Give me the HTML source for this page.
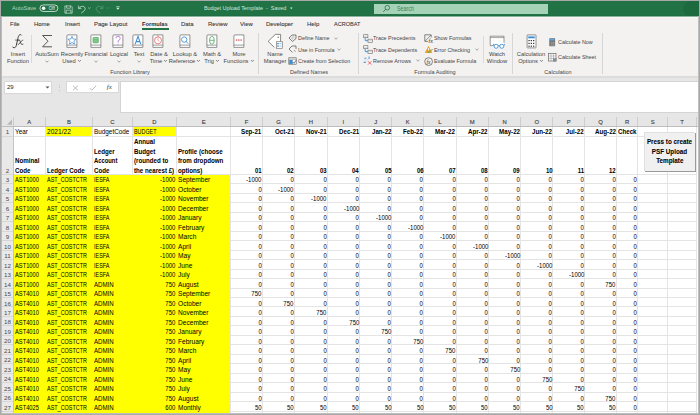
<!DOCTYPE html>
<html><head><meta charset="utf-8"><style>
html,body{margin:0;padding:0;width:700px;height:415px;overflow:hidden;background:#fff}
body{position:relative;font-family:"Liberation Sans",sans-serif}
.r{position:absolute}
.t{position:absolute;white-space:nowrap}
</style></head><body>
<div class="r" style="left:0px;top:0px;width:700px;height:415px;background:#a9a9a9;"></div>
<div class="r" style="left:1px;top:1px;width:698px;height:413px;background:#bdbdbd;"></div>
<div class="r" style="left:1px;top:1px;width:697px;height:412px;background:#c8c8c8;"></div>
<div class="r" style="left:1px;top:16px;width:1px;height:397px;background:#bcbcbc;"></div>
<div class="r" style="left:1px;top:1px;width:697px;height:15px;background:#217346;"></div>
<div class="r" style="left:1px;top:15px;width:697px;height:1px;background:#1f6d42;"></div>
<div class="r" style="left:2px;top:16px;width:696px;height:1px;background:#8ab39b;"></div>
<div class="r" style="left:2px;top:17px;width:696px;height:1px;background:#f8f7f6;"></div>
<div class="r" style="left:2px;top:18px;width:696px;height:58px;background:#f3f2f1;"></div>
<div class="r" style="left:2px;top:76px;width:696px;height:2px;background:#dcdcdc;"></div>
<div class="r" style="left:2px;top:78px;width:696px;height:40px;background:#e6e6e6;"></div>
<div class="r" style="left:2px;top:118px;width:696px;height:9px;background:#e6e6e6;"></div>
<div class="r" style="left:13px;top:127px;width:685px;height:286px;background:#ffffff;"></div>
<div class="r" style="left:46px;top:127px;width:46px;height:9px;background:#ffff00;"></div>
<div class="r" style="left:133px;top:127px;width:44px;height:9px;background:#ffff00;"></div>
<div class="r" style="left:14px;top:174px;width:217px;height:239px;background:#ffff00;"></div>
<div class="r" style="left:2px;top:127px;width:11px;height:286px;background:#e9e9e9;"></div>
<div class="r" style="left:45px;top:127px;width:1px;height:47px;background:#e4e4e4;"></div>
<div class="r" style="left:92px;top:127px;width:1px;height:47px;background:#e4e4e4;"></div>
<div class="r" style="left:132px;top:127px;width:1px;height:47px;background:#e4e4e4;"></div>
<div class="r" style="left:176px;top:127px;width:1px;height:47px;background:#e4e4e4;"></div>
<div class="r" style="left:230px;top:127px;width:1px;height:286px;background:#e4e4e4;"></div>
<div class="r" style="left:262px;top:127px;width:1px;height:286px;background:#e4e4e4;"></div>
<div class="r" style="left:294px;top:127px;width:1px;height:286px;background:#e4e4e4;"></div>
<div class="r" style="left:327px;top:127px;width:1px;height:286px;background:#e4e4e4;"></div>
<div class="r" style="left:359px;top:127px;width:1px;height:286px;background:#e4e4e4;"></div>
<div class="r" style="left:391px;top:127px;width:1px;height:286px;background:#e4e4e4;"></div>
<div class="r" style="left:423px;top:127px;width:1px;height:286px;background:#e4e4e4;"></div>
<div class="r" style="left:456px;top:127px;width:1px;height:286px;background:#e4e4e4;"></div>
<div class="r" style="left:488px;top:127px;width:1px;height:286px;background:#e4e4e4;"></div>
<div class="r" style="left:520px;top:127px;width:1px;height:286px;background:#e4e4e4;"></div>
<div class="r" style="left:552px;top:127px;width:1px;height:286px;background:#e4e4e4;"></div>
<div class="r" style="left:584px;top:127px;width:1px;height:286px;background:#e4e4e4;"></div>
<div class="r" style="left:616px;top:127px;width:1px;height:286px;background:#e4e4e4;"></div>
<div class="r" style="left:637px;top:127px;width:1px;height:286px;background:#e4e4e4;"></div>
<div class="r" style="left:667px;top:127px;width:1px;height:286px;background:#e4e4e4;"></div>
<div class="r" style="left:696px;top:127px;width:1px;height:286px;background:#e4e4e4;"></div>
<div class="r" style="left:13px;top:136px;width:684px;height:1px;background:#e4e4e4;"></div>
<div class="r" style="left:231px;top:174px;width:466px;height:1px;background:#e4e4e4;"></div>
<div class="r" style="left:13px;top:174px;width:684px;height:1px;background:#e4e4e4;"></div>
<div class="r" style="left:231px;top:183px;width:466px;height:1px;background:#e4e4e4;"></div>
<div class="r" style="left:231px;top:193px;width:466px;height:1px;background:#e4e4e4;"></div>
<div class="r" style="left:231px;top:202px;width:466px;height:1px;background:#e4e4e4;"></div>
<div class="r" style="left:231px;top:212px;width:466px;height:1px;background:#e4e4e4;"></div>
<div class="r" style="left:231px;top:221px;width:466px;height:1px;background:#e4e4e4;"></div>
<div class="r" style="left:231px;top:231px;width:466px;height:1px;background:#e4e4e4;"></div>
<div class="r" style="left:231px;top:240px;width:466px;height:1px;background:#e4e4e4;"></div>
<div class="r" style="left:231px;top:250px;width:466px;height:1px;background:#e4e4e4;"></div>
<div class="r" style="left:231px;top:259px;width:466px;height:1px;background:#e4e4e4;"></div>
<div class="r" style="left:231px;top:269px;width:466px;height:1px;background:#e4e4e4;"></div>
<div class="r" style="left:231px;top:278px;width:466px;height:1px;background:#e4e4e4;"></div>
<div class="r" style="left:231px;top:288px;width:466px;height:1px;background:#e4e4e4;"></div>
<div class="r" style="left:231px;top:297px;width:466px;height:1px;background:#e4e4e4;"></div>
<div class="r" style="left:231px;top:306px;width:466px;height:1px;background:#e4e4e4;"></div>
<div class="r" style="left:231px;top:316px;width:466px;height:1px;background:#e4e4e4;"></div>
<div class="r" style="left:231px;top:325px;width:466px;height:1px;background:#e4e4e4;"></div>
<div class="r" style="left:231px;top:335px;width:466px;height:1px;background:#e4e4e4;"></div>
<div class="r" style="left:231px;top:344px;width:466px;height:1px;background:#e4e4e4;"></div>
<div class="r" style="left:231px;top:354px;width:466px;height:1px;background:#e4e4e4;"></div>
<div class="r" style="left:231px;top:363px;width:466px;height:1px;background:#e4e4e4;"></div>
<div class="r" style="left:231px;top:373px;width:466px;height:1px;background:#e4e4e4;"></div>
<div class="r" style="left:231px;top:382px;width:466px;height:1px;background:#e4e4e4;"></div>
<div class="r" style="left:231px;top:392px;width:466px;height:1px;background:#e4e4e4;"></div>
<div class="r" style="left:231px;top:401px;width:466px;height:1px;background:#e4e4e4;"></div>
<div class="r" style="left:231px;top:411px;width:466px;height:1px;background:#e4e4e4;"></div>
<div class="r" style="left:13px;top:117px;width:1px;height:10px;background:#cdcdcd;"></div>
<div class="r" style="left:45px;top:117px;width:1px;height:10px;background:#cdcdcd;"></div>
<div class="r" style="left:92px;top:117px;width:1px;height:10px;background:#cdcdcd;"></div>
<div class="r" style="left:132px;top:117px;width:1px;height:10px;background:#cdcdcd;"></div>
<div class="r" style="left:176px;top:117px;width:1px;height:10px;background:#cdcdcd;"></div>
<div class="r" style="left:230px;top:117px;width:1px;height:10px;background:#cdcdcd;"></div>
<div class="r" style="left:262px;top:117px;width:1px;height:10px;background:#cdcdcd;"></div>
<div class="r" style="left:294px;top:117px;width:1px;height:10px;background:#cdcdcd;"></div>
<div class="r" style="left:327px;top:117px;width:1px;height:10px;background:#cdcdcd;"></div>
<div class="r" style="left:359px;top:117px;width:1px;height:10px;background:#cdcdcd;"></div>
<div class="r" style="left:391px;top:117px;width:1px;height:10px;background:#cdcdcd;"></div>
<div class="r" style="left:423px;top:117px;width:1px;height:10px;background:#cdcdcd;"></div>
<div class="r" style="left:456px;top:117px;width:1px;height:10px;background:#cdcdcd;"></div>
<div class="r" style="left:488px;top:117px;width:1px;height:10px;background:#cdcdcd;"></div>
<div class="r" style="left:520px;top:117px;width:1px;height:10px;background:#cdcdcd;"></div>
<div class="r" style="left:552px;top:117px;width:1px;height:10px;background:#cdcdcd;"></div>
<div class="r" style="left:584px;top:117px;width:1px;height:10px;background:#cdcdcd;"></div>
<div class="r" style="left:616px;top:117px;width:1px;height:10px;background:#cdcdcd;"></div>
<div class="r" style="left:637px;top:117px;width:1px;height:10px;background:#cdcdcd;"></div>
<div class="r" style="left:667px;top:117px;width:1px;height:10px;background:#cdcdcd;"></div>
<div class="r" style="left:696px;top:117px;width:1px;height:10px;background:#cdcdcd;"></div>
<div class="r" style="left:2px;top:126px;width:696px;height:1px;background:#bdbdbd;"></div>
<div class="r" style="left:2px;top:136px;width:11px;height:1px;background:#d6d6d6;"></div>
<div class="r" style="left:2px;top:174px;width:11px;height:1px;background:#d6d6d6;"></div>
<div class="r" style="left:2px;top:183px;width:11px;height:1px;background:#d6d6d6;"></div>
<div class="r" style="left:2px;top:193px;width:11px;height:1px;background:#d6d6d6;"></div>
<div class="r" style="left:2px;top:202px;width:11px;height:1px;background:#d6d6d6;"></div>
<div class="r" style="left:2px;top:212px;width:11px;height:1px;background:#d6d6d6;"></div>
<div class="r" style="left:2px;top:221px;width:11px;height:1px;background:#d6d6d6;"></div>
<div class="r" style="left:2px;top:231px;width:11px;height:1px;background:#d6d6d6;"></div>
<div class="r" style="left:2px;top:240px;width:11px;height:1px;background:#d6d6d6;"></div>
<div class="r" style="left:2px;top:250px;width:11px;height:1px;background:#d6d6d6;"></div>
<div class="r" style="left:2px;top:259px;width:11px;height:1px;background:#d6d6d6;"></div>
<div class="r" style="left:2px;top:269px;width:11px;height:1px;background:#d6d6d6;"></div>
<div class="r" style="left:2px;top:278px;width:11px;height:1px;background:#d6d6d6;"></div>
<div class="r" style="left:2px;top:288px;width:11px;height:1px;background:#d6d6d6;"></div>
<div class="r" style="left:2px;top:297px;width:11px;height:1px;background:#d6d6d6;"></div>
<div class="r" style="left:2px;top:306px;width:11px;height:1px;background:#d6d6d6;"></div>
<div class="r" style="left:2px;top:316px;width:11px;height:1px;background:#d6d6d6;"></div>
<div class="r" style="left:2px;top:325px;width:11px;height:1px;background:#d6d6d6;"></div>
<div class="r" style="left:2px;top:335px;width:11px;height:1px;background:#d6d6d6;"></div>
<div class="r" style="left:2px;top:344px;width:11px;height:1px;background:#d6d6d6;"></div>
<div class="r" style="left:2px;top:354px;width:11px;height:1px;background:#d6d6d6;"></div>
<div class="r" style="left:2px;top:363px;width:11px;height:1px;background:#d6d6d6;"></div>
<div class="r" style="left:2px;top:373px;width:11px;height:1px;background:#d6d6d6;"></div>
<div class="r" style="left:2px;top:382px;width:11px;height:1px;background:#d6d6d6;"></div>
<div class="r" style="left:2px;top:392px;width:11px;height:1px;background:#d6d6d6;"></div>
<div class="r" style="left:2px;top:401px;width:11px;height:1px;background:#d6d6d6;"></div>
<div class="r" style="left:2px;top:411px;width:11px;height:1px;background:#d6d6d6;"></div>
<div class="r" style="left:13px;top:127px;width:1px;height:286px;background:#c4c4c4;"></div>
<div class="t" style="left:-70.75px;width:200px;text-align:center;top:118.76px;font-size:5.9px;line-height:6.79px;font-weight:normal;color:#3c3c3c;-webkit-text-stroke:0.12px #3c3c3c;">A</div>
<div class="t" style="left:-31.05px;width:200px;text-align:center;top:118.76px;font-size:5.9px;line-height:6.79px;font-weight:normal;color:#3c3c3c;-webkit-text-stroke:0.12px #3c3c3c;">B</div>
<div class="t" style="left:12.40px;width:200px;text-align:center;top:118.76px;font-size:5.9px;line-height:6.79px;font-weight:normal;color:#3c3c3c;-webkit-text-stroke:0.12px #3c3c3c;">C</div>
<div class="t" style="left:54.50px;width:200px;text-align:center;top:118.76px;font-size:5.9px;line-height:6.79px;font-weight:normal;color:#3c3c3c;-webkit-text-stroke:0.12px #3c3c3c;">D</div>
<div class="t" style="left:103.60px;width:200px;text-align:center;top:118.76px;font-size:5.9px;line-height:6.79px;font-weight:normal;color:#3c3c3c;-webkit-text-stroke:0.12px #3c3c3c;">E</div>
<div class="t" style="left:146.50px;width:200px;text-align:center;top:118.76px;font-size:5.9px;line-height:6.79px;font-weight:normal;color:#3c3c3c;-webkit-text-stroke:0.12px #3c3c3c;">F</div>
<div class="t" style="left:178.45px;width:200px;text-align:center;top:118.76px;font-size:5.9px;line-height:6.79px;font-weight:normal;color:#3c3c3c;-webkit-text-stroke:0.12px #3c3c3c;">G</div>
<div class="t" style="left:210.80px;width:200px;text-align:center;top:118.76px;font-size:5.9px;line-height:6.79px;font-weight:normal;color:#3c3c3c;-webkit-text-stroke:0.12px #3c3c3c;">H</div>
<div class="t" style="left:243.40px;width:200px;text-align:center;top:118.76px;font-size:5.9px;line-height:6.79px;font-weight:normal;color:#3c3c3c;-webkit-text-stroke:0.12px #3c3c3c;">I</div>
<div class="t" style="left:275.75px;width:200px;text-align:center;top:118.76px;font-size:5.9px;line-height:6.79px;font-weight:normal;color:#3c3c3c;-webkit-text-stroke:0.12px #3c3c3c;">J</div>
<div class="t" style="left:307.80px;width:200px;text-align:center;top:118.76px;font-size:5.9px;line-height:6.79px;font-weight:normal;color:#3c3c3c;-webkit-text-stroke:0.12px #3c3c3c;">K</div>
<div class="t" style="left:339.90px;width:200px;text-align:center;top:118.76px;font-size:5.9px;line-height:6.79px;font-weight:normal;color:#3c3c3c;-webkit-text-stroke:0.12px #3c3c3c;">L</div>
<div class="t" style="left:372.30px;width:200px;text-align:center;top:118.76px;font-size:5.9px;line-height:6.79px;font-weight:normal;color:#3c3c3c;-webkit-text-stroke:0.12px #3c3c3c;">M</div>
<div class="t" style="left:404.60px;width:200px;text-align:center;top:118.76px;font-size:5.9px;line-height:6.79px;font-weight:normal;color:#3c3c3c;-webkit-text-stroke:0.12px #3c3c3c;">N</div>
<div class="t" style="left:436.75px;width:200px;text-align:center;top:118.76px;font-size:5.9px;line-height:6.79px;font-weight:normal;color:#3c3c3c;-webkit-text-stroke:0.12px #3c3c3c;">O</div>
<div class="t" style="left:468.75px;width:200px;text-align:center;top:118.76px;font-size:5.9px;line-height:6.79px;font-weight:normal;color:#3c3c3c;-webkit-text-stroke:0.12px #3c3c3c;">P</div>
<div class="t" style="left:500.55px;width:200px;text-align:center;top:118.76px;font-size:5.9px;line-height:6.79px;font-weight:normal;color:#3c3c3c;-webkit-text-stroke:0.12px #3c3c3c;">Q</div>
<div class="t" style="left:527.20px;width:200px;text-align:center;top:118.76px;font-size:5.9px;line-height:6.79px;font-weight:normal;color:#3c3c3c;-webkit-text-stroke:0.12px #3c3c3c;">R</div>
<div class="t" style="left:552.65px;width:200px;text-align:center;top:118.76px;font-size:5.9px;line-height:6.79px;font-weight:normal;color:#3c3c3c;-webkit-text-stroke:0.12px #3c3c3c;">S</div>
<div class="t" style="left:581.95px;width:200px;text-align:center;top:118.76px;font-size:5.9px;line-height:6.79px;font-weight:normal;color:#3c3c3c;-webkit-text-stroke:0.12px #3c3c3c;">T</div>
<div class="t" style="left:-92.50px;width:200px;text-align:center;top:128.49px;font-size:6.2px;line-height:7.13px;font-weight:normal;color:#4a4a4a;">1</div>
<div class="t" style="left:-92.50px;width:200px;text-align:center;top:166.99px;font-size:6.2px;line-height:7.13px;font-weight:normal;color:#4a4a4a;">2</div>
<div class="t" style="left:-92.50px;width:200px;text-align:center;top:176.49px;font-size:6.2px;line-height:7.13px;font-weight:normal;color:#4a4a4a;">3</div>
<div class="t" style="left:-92.50px;width:200px;text-align:center;top:185.95px;font-size:6.2px;line-height:7.13px;font-weight:normal;color:#4a4a4a;">4</div>
<div class="t" style="left:-92.50px;width:200px;text-align:center;top:195.41px;font-size:6.2px;line-height:7.13px;font-weight:normal;color:#4a4a4a;">5</div>
<div class="t" style="left:-92.50px;width:200px;text-align:center;top:204.88px;font-size:6.2px;line-height:7.13px;font-weight:normal;color:#4a4a4a;">6</div>
<div class="t" style="left:-92.50px;width:200px;text-align:center;top:214.34px;font-size:6.2px;line-height:7.13px;font-weight:normal;color:#4a4a4a;">7</div>
<div class="t" style="left:-92.50px;width:200px;text-align:center;top:223.81px;font-size:6.2px;line-height:7.13px;font-weight:normal;color:#4a4a4a;">8</div>
<div class="t" style="left:-92.50px;width:200px;text-align:center;top:233.27px;font-size:6.2px;line-height:7.13px;font-weight:normal;color:#4a4a4a;">9</div>
<div class="t" style="left:-92.50px;width:200px;text-align:center;top:242.73px;font-size:6.2px;line-height:7.13px;font-weight:normal;color:#4a4a4a;">10</div>
<div class="t" style="left:-92.50px;width:200px;text-align:center;top:252.20px;font-size:6.2px;line-height:7.13px;font-weight:normal;color:#4a4a4a;">11</div>
<div class="t" style="left:-92.50px;width:200px;text-align:center;top:261.66px;font-size:6.2px;line-height:7.13px;font-weight:normal;color:#4a4a4a;">12</div>
<div class="t" style="left:-92.50px;width:200px;text-align:center;top:271.13px;font-size:6.2px;line-height:7.13px;font-weight:normal;color:#4a4a4a;">13</div>
<div class="t" style="left:-92.50px;width:200px;text-align:center;top:280.59px;font-size:6.2px;line-height:7.13px;font-weight:normal;color:#4a4a4a;">14</div>
<div class="t" style="left:-92.50px;width:200px;text-align:center;top:290.05px;font-size:6.2px;line-height:7.13px;font-weight:normal;color:#4a4a4a;">15</div>
<div class="t" style="left:-92.50px;width:200px;text-align:center;top:299.52px;font-size:6.2px;line-height:7.13px;font-weight:normal;color:#4a4a4a;">16</div>
<div class="t" style="left:-92.50px;width:200px;text-align:center;top:308.98px;font-size:6.2px;line-height:7.13px;font-weight:normal;color:#4a4a4a;">17</div>
<div class="t" style="left:-92.50px;width:200px;text-align:center;top:318.45px;font-size:6.2px;line-height:7.13px;font-weight:normal;color:#4a4a4a;">18</div>
<div class="t" style="left:-92.50px;width:200px;text-align:center;top:327.91px;font-size:6.2px;line-height:7.13px;font-weight:normal;color:#4a4a4a;">19</div>
<div class="t" style="left:-92.50px;width:200px;text-align:center;top:337.37px;font-size:6.2px;line-height:7.13px;font-weight:normal;color:#4a4a4a;">20</div>
<div class="t" style="left:-92.50px;width:200px;text-align:center;top:346.84px;font-size:6.2px;line-height:7.13px;font-weight:normal;color:#4a4a4a;">21</div>
<div class="t" style="left:-92.50px;width:200px;text-align:center;top:356.30px;font-size:6.2px;line-height:7.13px;font-weight:normal;color:#4a4a4a;">22</div>
<div class="t" style="left:-92.50px;width:200px;text-align:center;top:365.77px;font-size:6.2px;line-height:7.13px;font-weight:normal;color:#4a4a4a;">23</div>
<div class="t" style="left:-92.50px;width:200px;text-align:center;top:375.23px;font-size:6.2px;line-height:7.13px;font-weight:normal;color:#4a4a4a;">24</div>
<div class="t" style="left:-92.50px;width:200px;text-align:center;top:384.69px;font-size:6.2px;line-height:7.13px;font-weight:normal;color:#4a4a4a;">25</div>
<div class="t" style="left:-92.50px;width:200px;text-align:center;top:394.16px;font-size:6.2px;line-height:7.13px;font-weight:normal;color:#4a4a4a;">26</div>
<div class="t" style="left:-92.50px;width:200px;text-align:center;top:403.62px;font-size:6.2px;line-height:7.13px;font-weight:normal;color:#4a4a4a;">27</div>
<svg class="r" style="left:3px;top:119px" width="10" height="8"><path d="M9 0.6 L9 5.7 L3.9 5.7 Z" fill="#b8b8b8"/></svg>
<div class="t" style="left:14.50px;top:128.13px;font-size:6.8px;line-height:7.82px;font-weight:normal;color:#000;transform:scaleX(0.9353);transform-origin:left;">Year</div>
<div class="t" style="left:47.00px;top:128.13px;font-size:6.8px;line-height:7.82px;font-weight:normal;color:#000;transform:scaleX(0.9706);transform-origin:left;">2021/22</div>
<div class="t" style="left:93.90px;top:128.13px;font-size:6.8px;line-height:7.82px;font-weight:normal;color:#000;transform:scaleX(0.9353);transform-origin:left;">BudgetCode</div>
<div class="t" style="left:133.90px;top:128.13px;font-size:6.8px;line-height:7.82px;font-weight:normal;color:#000;transform:scaleX(0.7941);transform-origin:left;">BUDGET</div>
<div class="t" style="right:438.30px;top:128.13px;font-size:6.8px;line-height:7.82px;font-weight:bold;color:#000;transform:scaleX(0.9088);transform-origin:right;-webkit-text-stroke:0.02px #000;">Sep-21</div>
<div class="t" style="right:406.20px;top:128.13px;font-size:6.8px;line-height:7.82px;font-weight:bold;color:#000;transform:scaleX(0.9088);transform-origin:right;-webkit-text-stroke:0.02px #000;">Oct-21</div>
<div class="t" style="right:373.60px;top:128.13px;font-size:6.8px;line-height:7.82px;font-weight:bold;color:#000;transform:scaleX(0.9088);transform-origin:right;-webkit-text-stroke:0.02px #000;">Nov-21</div>
<div class="t" style="right:341.00px;top:128.13px;font-size:6.8px;line-height:7.82px;font-weight:bold;color:#000;transform:scaleX(0.9088);transform-origin:right;-webkit-text-stroke:0.02px #000;">Dec-21</div>
<div class="t" style="right:308.90px;top:128.13px;font-size:6.8px;line-height:7.82px;font-weight:bold;color:#000;transform:scaleX(0.9088);transform-origin:right;-webkit-text-stroke:0.02px #000;">Jan-22</div>
<div class="t" style="right:276.90px;top:128.13px;font-size:6.8px;line-height:7.82px;font-weight:bold;color:#000;transform:scaleX(0.9088);transform-origin:right;-webkit-text-stroke:0.02px #000;">Feb-22</div>
<div class="t" style="right:244.70px;top:128.13px;font-size:6.8px;line-height:7.82px;font-weight:bold;color:#000;transform:scaleX(0.9088);transform-origin:right;-webkit-text-stroke:0.02px #000;">Mar-22</div>
<div class="t" style="right:212.10px;top:128.13px;font-size:6.8px;line-height:7.82px;font-weight:bold;color:#000;transform:scaleX(0.9088);transform-origin:right;-webkit-text-stroke:0.02px #000;">Apr-22</div>
<div class="t" style="right:180.10px;top:128.13px;font-size:6.8px;line-height:7.82px;font-weight:bold;color:#000;transform:scaleX(0.9088);transform-origin:right;-webkit-text-stroke:0.02px #000;">May-22</div>
<div class="t" style="right:147.80px;top:128.13px;font-size:6.8px;line-height:7.82px;font-weight:bold;color:#000;transform:scaleX(0.9088);transform-origin:right;-webkit-text-stroke:0.02px #000;">Jun-22</div>
<div class="t" style="right:116.10px;top:128.13px;font-size:6.8px;line-height:7.82px;font-weight:bold;color:#000;transform:scaleX(0.9088);transform-origin:right;-webkit-text-stroke:0.02px #000;">Jul-22</div>
<div class="t" style="right:84.20px;top:128.13px;font-size:6.8px;line-height:7.82px;font-weight:bold;color:#000;transform:scaleX(0.9088);transform-origin:right;-webkit-text-stroke:0.02px #000;">Aug-22</div>
<div class="t" style="left:618.00px;top:128.13px;font-size:6.8px;line-height:7.82px;font-weight:bold;color:#000;transform:scaleX(0.9088);transform-origin:left;-webkit-text-stroke:0.02px #000;">Check</div>
<div class="t" style="left:14.50px;top:166.73px;font-size:6.8px;line-height:7.82px;font-weight:bold;color:#000;transform:scaleX(0.9088);transform-origin:left;-webkit-text-stroke:0.02px #000;">Code</div>
<div class="t" style="left:14.50px;top:157.28px;font-size:6.8px;line-height:7.82px;font-weight:bold;color:#000;transform:scaleX(0.9088);transform-origin:left;-webkit-text-stroke:0.02px #000;">Nominal</div>
<div class="t" style="left:47.00px;top:166.73px;font-size:6.8px;line-height:7.82px;font-weight:bold;color:#000;transform:scaleX(0.9088);transform-origin:left;-webkit-text-stroke:0.02px #000;">Ledger Code</div>
<div class="t" style="left:93.90px;top:166.73px;font-size:6.8px;line-height:7.82px;font-weight:bold;color:#000;transform:scaleX(0.9088);transform-origin:left;-webkit-text-stroke:0.02px #000;">Code</div>
<div class="t" style="left:93.90px;top:157.28px;font-size:6.8px;line-height:7.82px;font-weight:bold;color:#000;transform:scaleX(0.8603);transform-origin:left;-webkit-text-stroke:0.02px #000;">Account</div>
<div class="t" style="left:93.90px;top:147.83px;font-size:6.8px;line-height:7.82px;font-weight:bold;color:#000;transform:scaleX(0.9088);transform-origin:left;-webkit-text-stroke:0.02px #000;">Ledger</div>
<div class="t" style="left:133.90px;top:166.73px;font-size:6.8px;line-height:7.82px;font-weight:bold;color:#000;transform:scaleX(0.9088);transform-origin:left;-webkit-text-stroke:0.02px #000;">the nearest £)</div>
<div class="t" style="left:133.90px;top:157.28px;font-size:6.8px;line-height:7.82px;font-weight:bold;color:#000;transform:scaleX(0.9088);transform-origin:left;-webkit-text-stroke:0.02px #000;">(rounded to</div>
<div class="t" style="left:133.90px;top:147.83px;font-size:6.8px;line-height:7.82px;font-weight:bold;color:#000;transform:scaleX(0.9088);transform-origin:left;-webkit-text-stroke:0.02px #000;">Budget</div>
<div class="t" style="left:133.90px;top:138.38px;font-size:6.8px;line-height:7.82px;font-weight:bold;color:#000;transform:scaleX(0.9088);transform-origin:left;-webkit-text-stroke:0.02px #000;">Annual</div>
<div class="t" style="left:178.10px;top:166.73px;font-size:6.8px;line-height:7.82px;font-weight:bold;color:#000;transform:scaleX(0.9088);transform-origin:left;-webkit-text-stroke:0.02px #000;">options)</div>
<div class="t" style="left:178.10px;top:157.28px;font-size:6.8px;line-height:7.82px;font-weight:bold;color:#000;transform:scaleX(0.9088);transform-origin:left;-webkit-text-stroke:0.02px #000;">from dropdown</div>
<div class="t" style="left:178.10px;top:147.83px;font-size:6.8px;line-height:7.82px;font-weight:bold;color:#000;transform:scaleX(0.9088);transform-origin:left;-webkit-text-stroke:0.02px #000;">Profile (choose</div>
<div class="t" style="right:438.30px;top:166.73px;font-size:6.8px;line-height:7.82px;font-weight:bold;color:#000;transform:scaleX(0.8824);transform-origin:right;-webkit-text-stroke:0.02px #000;">01</div>
<div class="t" style="right:406.20px;top:166.73px;font-size:6.8px;line-height:7.82px;font-weight:bold;color:#000;transform:scaleX(0.8824);transform-origin:right;-webkit-text-stroke:0.02px #000;">02</div>
<div class="t" style="right:373.60px;top:166.73px;font-size:6.8px;line-height:7.82px;font-weight:bold;color:#000;transform:scaleX(0.8824);transform-origin:right;-webkit-text-stroke:0.02px #000;">03</div>
<div class="t" style="right:341.00px;top:166.73px;font-size:6.8px;line-height:7.82px;font-weight:bold;color:#000;transform:scaleX(0.8824);transform-origin:right;-webkit-text-stroke:0.02px #000;">04</div>
<div class="t" style="right:308.90px;top:166.73px;font-size:6.8px;line-height:7.82px;font-weight:bold;color:#000;transform:scaleX(0.8824);transform-origin:right;-webkit-text-stroke:0.02px #000;">05</div>
<div class="t" style="right:276.90px;top:166.73px;font-size:6.8px;line-height:7.82px;font-weight:bold;color:#000;transform:scaleX(0.8824);transform-origin:right;-webkit-text-stroke:0.02px #000;">06</div>
<div class="t" style="right:244.70px;top:166.73px;font-size:6.8px;line-height:7.82px;font-weight:bold;color:#000;transform:scaleX(0.8824);transform-origin:right;-webkit-text-stroke:0.02px #000;">07</div>
<div class="t" style="right:212.10px;top:166.73px;font-size:6.8px;line-height:7.82px;font-weight:bold;color:#000;transform:scaleX(0.8824);transform-origin:right;-webkit-text-stroke:0.02px #000;">08</div>
<div class="t" style="right:180.10px;top:166.73px;font-size:6.8px;line-height:7.82px;font-weight:bold;color:#000;transform:scaleX(0.8824);transform-origin:right;-webkit-text-stroke:0.02px #000;">09</div>
<div class="t" style="right:147.80px;top:166.73px;font-size:6.8px;line-height:7.82px;font-weight:bold;color:#000;transform:scaleX(0.8824);transform-origin:right;-webkit-text-stroke:0.02px #000;">10</div>
<div class="t" style="right:116.10px;top:166.73px;font-size:6.8px;line-height:7.82px;font-weight:bold;color:#000;transform:scaleX(0.8824);transform-origin:right;-webkit-text-stroke:0.02px #000;">11</div>
<div class="t" style="right:84.20px;top:166.73px;font-size:6.8px;line-height:7.82px;font-weight:bold;color:#000;transform:scaleX(0.8824);transform-origin:right;-webkit-text-stroke:0.02px #000;">12</div>
<div class="t" style="left:14.50px;top:176.13px;font-size:6.8px;line-height:7.82px;font-weight:normal;color:#000;transform:scaleX(0.8426);transform-origin:left;">AST1000</div>
<div class="t" style="left:47.00px;top:176.13px;font-size:6.8px;line-height:7.82px;font-weight:normal;color:#000;transform:scaleX(0.8029);transform-origin:left;">AST_COSTCTR</div>
<div class="t" style="left:93.90px;top:176.13px;font-size:6.8px;line-height:7.82px;font-weight:normal;color:#000;transform:scaleX(0.7985);transform-origin:left;">IESFA</div>
<div class="t" style="right:524.70px;top:176.13px;font-size:6.8px;line-height:7.82px;font-weight:normal;color:#000;transform:scaleX(0.8824);transform-origin:right;">-1000</div>
<div class="t" style="left:178.10px;top:176.13px;font-size:6.8px;line-height:7.82px;font-weight:normal;color:#000;transform:scaleX(0.9706);transform-origin:left;">September</div>
<div class="t" style="right:438.30px;top:176.13px;font-size:6.8px;line-height:7.82px;font-weight:normal;color:#000;transform:scaleX(0.8824);transform-origin:right;">-1000</div>
<div class="t" style="right:406.20px;top:176.13px;font-size:6.8px;line-height:7.82px;font-weight:normal;color:#000;transform:scaleX(0.8824);transform-origin:right;">0</div>
<div class="t" style="right:373.60px;top:176.13px;font-size:6.8px;line-height:7.82px;font-weight:normal;color:#000;transform:scaleX(0.8824);transform-origin:right;">0</div>
<div class="t" style="right:341.00px;top:176.13px;font-size:6.8px;line-height:7.82px;font-weight:normal;color:#000;transform:scaleX(0.8824);transform-origin:right;">0</div>
<div class="t" style="right:308.90px;top:176.13px;font-size:6.8px;line-height:7.82px;font-weight:normal;color:#000;transform:scaleX(0.8824);transform-origin:right;">0</div>
<div class="t" style="right:276.90px;top:176.13px;font-size:6.8px;line-height:7.82px;font-weight:normal;color:#000;transform:scaleX(0.8824);transform-origin:right;">0</div>
<div class="t" style="right:244.70px;top:176.13px;font-size:6.8px;line-height:7.82px;font-weight:normal;color:#000;transform:scaleX(0.8824);transform-origin:right;">0</div>
<div class="t" style="right:212.10px;top:176.13px;font-size:6.8px;line-height:7.82px;font-weight:normal;color:#000;transform:scaleX(0.8824);transform-origin:right;">0</div>
<div class="t" style="right:180.10px;top:176.13px;font-size:6.8px;line-height:7.82px;font-weight:normal;color:#000;transform:scaleX(0.8824);transform-origin:right;">0</div>
<div class="t" style="right:147.80px;top:176.13px;font-size:6.8px;line-height:7.82px;font-weight:normal;color:#000;transform:scaleX(0.8824);transform-origin:right;">0</div>
<div class="t" style="right:116.10px;top:176.13px;font-size:6.8px;line-height:7.82px;font-weight:normal;color:#000;transform:scaleX(0.8824);transform-origin:right;">0</div>
<div class="t" style="right:84.20px;top:176.13px;font-size:6.8px;line-height:7.82px;font-weight:normal;color:#000;transform:scaleX(0.8824);transform-origin:right;">0</div>
<div class="t" style="right:62.80px;top:176.13px;font-size:6.8px;line-height:7.82px;font-weight:normal;color:#000;transform:scaleX(0.8824);transform-origin:right;">0</div>
<div class="t" style="left:14.50px;top:185.63px;font-size:6.8px;line-height:7.82px;font-weight:normal;color:#000;transform:scaleX(0.8426);transform-origin:left;">AST1000</div>
<div class="t" style="left:47.00px;top:185.63px;font-size:6.8px;line-height:7.82px;font-weight:normal;color:#000;transform:scaleX(0.8029);transform-origin:left;">AST_COSTCTR</div>
<div class="t" style="left:93.90px;top:185.63px;font-size:6.8px;line-height:7.82px;font-weight:normal;color:#000;transform:scaleX(0.7985);transform-origin:left;">IESFA</div>
<div class="t" style="right:524.70px;top:185.63px;font-size:6.8px;line-height:7.82px;font-weight:normal;color:#000;transform:scaleX(0.8824);transform-origin:right;">-1000</div>
<div class="t" style="left:178.10px;top:185.63px;font-size:6.8px;line-height:7.82px;font-weight:normal;color:#000;transform:scaleX(0.9706);transform-origin:left;">October</div>
<div class="t" style="right:438.30px;top:185.63px;font-size:6.8px;line-height:7.82px;font-weight:normal;color:#000;transform:scaleX(0.8824);transform-origin:right;">0</div>
<div class="t" style="right:406.20px;top:185.63px;font-size:6.8px;line-height:7.82px;font-weight:normal;color:#000;transform:scaleX(0.8824);transform-origin:right;">-1000</div>
<div class="t" style="right:373.60px;top:185.63px;font-size:6.8px;line-height:7.82px;font-weight:normal;color:#000;transform:scaleX(0.8824);transform-origin:right;">0</div>
<div class="t" style="right:341.00px;top:185.63px;font-size:6.8px;line-height:7.82px;font-weight:normal;color:#000;transform:scaleX(0.8824);transform-origin:right;">0</div>
<div class="t" style="right:308.90px;top:185.63px;font-size:6.8px;line-height:7.82px;font-weight:normal;color:#000;transform:scaleX(0.8824);transform-origin:right;">0</div>
<div class="t" style="right:276.90px;top:185.63px;font-size:6.8px;line-height:7.82px;font-weight:normal;color:#000;transform:scaleX(0.8824);transform-origin:right;">0</div>
<div class="t" style="right:244.70px;top:185.63px;font-size:6.8px;line-height:7.82px;font-weight:normal;color:#000;transform:scaleX(0.8824);transform-origin:right;">0</div>
<div class="t" style="right:212.10px;top:185.63px;font-size:6.8px;line-height:7.82px;font-weight:normal;color:#000;transform:scaleX(0.8824);transform-origin:right;">0</div>
<div class="t" style="right:180.10px;top:185.63px;font-size:6.8px;line-height:7.82px;font-weight:normal;color:#000;transform:scaleX(0.8824);transform-origin:right;">0</div>
<div class="t" style="right:147.80px;top:185.63px;font-size:6.8px;line-height:7.82px;font-weight:normal;color:#000;transform:scaleX(0.8824);transform-origin:right;">0</div>
<div class="t" style="right:116.10px;top:185.63px;font-size:6.8px;line-height:7.82px;font-weight:normal;color:#000;transform:scaleX(0.8824);transform-origin:right;">0</div>
<div class="t" style="right:84.20px;top:185.63px;font-size:6.8px;line-height:7.82px;font-weight:normal;color:#000;transform:scaleX(0.8824);transform-origin:right;">0</div>
<div class="t" style="right:62.80px;top:185.63px;font-size:6.8px;line-height:7.82px;font-weight:normal;color:#000;transform:scaleX(0.8824);transform-origin:right;">0</div>
<div class="t" style="left:14.50px;top:195.13px;font-size:6.8px;line-height:7.82px;font-weight:normal;color:#000;transform:scaleX(0.8426);transform-origin:left;">AST1000</div>
<div class="t" style="left:47.00px;top:195.13px;font-size:6.8px;line-height:7.82px;font-weight:normal;color:#000;transform:scaleX(0.8029);transform-origin:left;">AST_COSTCTR</div>
<div class="t" style="left:93.90px;top:195.13px;font-size:6.8px;line-height:7.82px;font-weight:normal;color:#000;transform:scaleX(0.7985);transform-origin:left;">IESFA</div>
<div class="t" style="right:524.70px;top:195.13px;font-size:6.8px;line-height:7.82px;font-weight:normal;color:#000;transform:scaleX(0.8824);transform-origin:right;">-1000</div>
<div class="t" style="left:178.10px;top:195.13px;font-size:6.8px;line-height:7.82px;font-weight:normal;color:#000;transform:scaleX(0.9706);transform-origin:left;">November</div>
<div class="t" style="right:438.30px;top:195.13px;font-size:6.8px;line-height:7.82px;font-weight:normal;color:#000;transform:scaleX(0.8824);transform-origin:right;">0</div>
<div class="t" style="right:406.20px;top:195.13px;font-size:6.8px;line-height:7.82px;font-weight:normal;color:#000;transform:scaleX(0.8824);transform-origin:right;">0</div>
<div class="t" style="right:373.60px;top:195.13px;font-size:6.8px;line-height:7.82px;font-weight:normal;color:#000;transform:scaleX(0.8824);transform-origin:right;">-1000</div>
<div class="t" style="right:341.00px;top:195.13px;font-size:6.8px;line-height:7.82px;font-weight:normal;color:#000;transform:scaleX(0.8824);transform-origin:right;">0</div>
<div class="t" style="right:308.90px;top:195.13px;font-size:6.8px;line-height:7.82px;font-weight:normal;color:#000;transform:scaleX(0.8824);transform-origin:right;">0</div>
<div class="t" style="right:276.90px;top:195.13px;font-size:6.8px;line-height:7.82px;font-weight:normal;color:#000;transform:scaleX(0.8824);transform-origin:right;">0</div>
<div class="t" style="right:244.70px;top:195.13px;font-size:6.8px;line-height:7.82px;font-weight:normal;color:#000;transform:scaleX(0.8824);transform-origin:right;">0</div>
<div class="t" style="right:212.10px;top:195.13px;font-size:6.8px;line-height:7.82px;font-weight:normal;color:#000;transform:scaleX(0.8824);transform-origin:right;">0</div>
<div class="t" style="right:180.10px;top:195.13px;font-size:6.8px;line-height:7.82px;font-weight:normal;color:#000;transform:scaleX(0.8824);transform-origin:right;">0</div>
<div class="t" style="right:147.80px;top:195.13px;font-size:6.8px;line-height:7.82px;font-weight:normal;color:#000;transform:scaleX(0.8824);transform-origin:right;">0</div>
<div class="t" style="right:116.10px;top:195.13px;font-size:6.8px;line-height:7.82px;font-weight:normal;color:#000;transform:scaleX(0.8824);transform-origin:right;">0</div>
<div class="t" style="right:84.20px;top:195.13px;font-size:6.8px;line-height:7.82px;font-weight:normal;color:#000;transform:scaleX(0.8824);transform-origin:right;">0</div>
<div class="t" style="right:62.80px;top:195.13px;font-size:6.8px;line-height:7.82px;font-weight:normal;color:#000;transform:scaleX(0.8824);transform-origin:right;">0</div>
<div class="t" style="left:14.50px;top:204.63px;font-size:6.8px;line-height:7.82px;font-weight:normal;color:#000;transform:scaleX(0.8426);transform-origin:left;">AST1000</div>
<div class="t" style="left:47.00px;top:204.63px;font-size:6.8px;line-height:7.82px;font-weight:normal;color:#000;transform:scaleX(0.8029);transform-origin:left;">AST_COSTCTR</div>
<div class="t" style="left:93.90px;top:204.63px;font-size:6.8px;line-height:7.82px;font-weight:normal;color:#000;transform:scaleX(0.7985);transform-origin:left;">IESFA</div>
<div class="t" style="right:524.70px;top:204.63px;font-size:6.8px;line-height:7.82px;font-weight:normal;color:#000;transform:scaleX(0.8824);transform-origin:right;">-1000</div>
<div class="t" style="left:178.10px;top:204.63px;font-size:6.8px;line-height:7.82px;font-weight:normal;color:#000;transform:scaleX(0.9706);transform-origin:left;">December</div>
<div class="t" style="right:438.30px;top:204.63px;font-size:6.8px;line-height:7.82px;font-weight:normal;color:#000;transform:scaleX(0.8824);transform-origin:right;">0</div>
<div class="t" style="right:406.20px;top:204.63px;font-size:6.8px;line-height:7.82px;font-weight:normal;color:#000;transform:scaleX(0.8824);transform-origin:right;">0</div>
<div class="t" style="right:373.60px;top:204.63px;font-size:6.8px;line-height:7.82px;font-weight:normal;color:#000;transform:scaleX(0.8824);transform-origin:right;">0</div>
<div class="t" style="right:341.00px;top:204.63px;font-size:6.8px;line-height:7.82px;font-weight:normal;color:#000;transform:scaleX(0.8824);transform-origin:right;">-1000</div>
<div class="t" style="right:308.90px;top:204.63px;font-size:6.8px;line-height:7.82px;font-weight:normal;color:#000;transform:scaleX(0.8824);transform-origin:right;">0</div>
<div class="t" style="right:276.90px;top:204.63px;font-size:6.8px;line-height:7.82px;font-weight:normal;color:#000;transform:scaleX(0.8824);transform-origin:right;">0</div>
<div class="t" style="right:244.70px;top:204.63px;font-size:6.8px;line-height:7.82px;font-weight:normal;color:#000;transform:scaleX(0.8824);transform-origin:right;">0</div>
<div class="t" style="right:212.10px;top:204.63px;font-size:6.8px;line-height:7.82px;font-weight:normal;color:#000;transform:scaleX(0.8824);transform-origin:right;">0</div>
<div class="t" style="right:180.10px;top:204.63px;font-size:6.8px;line-height:7.82px;font-weight:normal;color:#000;transform:scaleX(0.8824);transform-origin:right;">0</div>
<div class="t" style="right:147.80px;top:204.63px;font-size:6.8px;line-height:7.82px;font-weight:normal;color:#000;transform:scaleX(0.8824);transform-origin:right;">0</div>
<div class="t" style="right:116.10px;top:204.63px;font-size:6.8px;line-height:7.82px;font-weight:normal;color:#000;transform:scaleX(0.8824);transform-origin:right;">0</div>
<div class="t" style="right:84.20px;top:204.63px;font-size:6.8px;line-height:7.82px;font-weight:normal;color:#000;transform:scaleX(0.8824);transform-origin:right;">0</div>
<div class="t" style="right:62.80px;top:204.63px;font-size:6.8px;line-height:7.82px;font-weight:normal;color:#000;transform:scaleX(0.8824);transform-origin:right;">0</div>
<div class="t" style="left:14.50px;top:214.13px;font-size:6.8px;line-height:7.82px;font-weight:normal;color:#000;transform:scaleX(0.8426);transform-origin:left;">AST1000</div>
<div class="t" style="left:47.00px;top:214.13px;font-size:6.8px;line-height:7.82px;font-weight:normal;color:#000;transform:scaleX(0.8029);transform-origin:left;">AST_COSTCTR</div>
<div class="t" style="left:93.90px;top:214.13px;font-size:6.8px;line-height:7.82px;font-weight:normal;color:#000;transform:scaleX(0.7985);transform-origin:left;">IESFA</div>
<div class="t" style="right:524.70px;top:214.13px;font-size:6.8px;line-height:7.82px;font-weight:normal;color:#000;transform:scaleX(0.8824);transform-origin:right;">-1000</div>
<div class="t" style="left:178.10px;top:214.13px;font-size:6.8px;line-height:7.82px;font-weight:normal;color:#000;transform:scaleX(0.9706);transform-origin:left;">January</div>
<div class="t" style="right:438.30px;top:214.13px;font-size:6.8px;line-height:7.82px;font-weight:normal;color:#000;transform:scaleX(0.8824);transform-origin:right;">0</div>
<div class="t" style="right:406.20px;top:214.13px;font-size:6.8px;line-height:7.82px;font-weight:normal;color:#000;transform:scaleX(0.8824);transform-origin:right;">0</div>
<div class="t" style="right:373.60px;top:214.13px;font-size:6.8px;line-height:7.82px;font-weight:normal;color:#000;transform:scaleX(0.8824);transform-origin:right;">0</div>
<div class="t" style="right:341.00px;top:214.13px;font-size:6.8px;line-height:7.82px;font-weight:normal;color:#000;transform:scaleX(0.8824);transform-origin:right;">0</div>
<div class="t" style="right:308.90px;top:214.13px;font-size:6.8px;line-height:7.82px;font-weight:normal;color:#000;transform:scaleX(0.8824);transform-origin:right;">-1000</div>
<div class="t" style="right:276.90px;top:214.13px;font-size:6.8px;line-height:7.82px;font-weight:normal;color:#000;transform:scaleX(0.8824);transform-origin:right;">0</div>
<div class="t" style="right:244.70px;top:214.13px;font-size:6.8px;line-height:7.82px;font-weight:normal;color:#000;transform:scaleX(0.8824);transform-origin:right;">0</div>
<div class="t" style="right:212.10px;top:214.13px;font-size:6.8px;line-height:7.82px;font-weight:normal;color:#000;transform:scaleX(0.8824);transform-origin:right;">0</div>
<div class="t" style="right:180.10px;top:214.13px;font-size:6.8px;line-height:7.82px;font-weight:normal;color:#000;transform:scaleX(0.8824);transform-origin:right;">0</div>
<div class="t" style="right:147.80px;top:214.13px;font-size:6.8px;line-height:7.82px;font-weight:normal;color:#000;transform:scaleX(0.8824);transform-origin:right;">0</div>
<div class="t" style="right:116.10px;top:214.13px;font-size:6.8px;line-height:7.82px;font-weight:normal;color:#000;transform:scaleX(0.8824);transform-origin:right;">0</div>
<div class="t" style="right:84.20px;top:214.13px;font-size:6.8px;line-height:7.82px;font-weight:normal;color:#000;transform:scaleX(0.8824);transform-origin:right;">0</div>
<div class="t" style="right:62.80px;top:214.13px;font-size:6.8px;line-height:7.82px;font-weight:normal;color:#000;transform:scaleX(0.8824);transform-origin:right;">0</div>
<div class="t" style="left:14.50px;top:223.63px;font-size:6.8px;line-height:7.82px;font-weight:normal;color:#000;transform:scaleX(0.8426);transform-origin:left;">AST1000</div>
<div class="t" style="left:47.00px;top:223.63px;font-size:6.8px;line-height:7.82px;font-weight:normal;color:#000;transform:scaleX(0.8029);transform-origin:left;">AST_COSTCTR</div>
<div class="t" style="left:93.90px;top:223.63px;font-size:6.8px;line-height:7.82px;font-weight:normal;color:#000;transform:scaleX(0.7985);transform-origin:left;">IESFA</div>
<div class="t" style="right:524.70px;top:223.63px;font-size:6.8px;line-height:7.82px;font-weight:normal;color:#000;transform:scaleX(0.8824);transform-origin:right;">-1000</div>
<div class="t" style="left:178.10px;top:223.63px;font-size:6.8px;line-height:7.82px;font-weight:normal;color:#000;transform:scaleX(0.9706);transform-origin:left;">February</div>
<div class="t" style="right:438.30px;top:223.63px;font-size:6.8px;line-height:7.82px;font-weight:normal;color:#000;transform:scaleX(0.8824);transform-origin:right;">0</div>
<div class="t" style="right:406.20px;top:223.63px;font-size:6.8px;line-height:7.82px;font-weight:normal;color:#000;transform:scaleX(0.8824);transform-origin:right;">0</div>
<div class="t" style="right:373.60px;top:223.63px;font-size:6.8px;line-height:7.82px;font-weight:normal;color:#000;transform:scaleX(0.8824);transform-origin:right;">0</div>
<div class="t" style="right:341.00px;top:223.63px;font-size:6.8px;line-height:7.82px;font-weight:normal;color:#000;transform:scaleX(0.8824);transform-origin:right;">0</div>
<div class="t" style="right:308.90px;top:223.63px;font-size:6.8px;line-height:7.82px;font-weight:normal;color:#000;transform:scaleX(0.8824);transform-origin:right;">0</div>
<div class="t" style="right:276.90px;top:223.63px;font-size:6.8px;line-height:7.82px;font-weight:normal;color:#000;transform:scaleX(0.8824);transform-origin:right;">-1000</div>
<div class="t" style="right:244.70px;top:223.63px;font-size:6.8px;line-height:7.82px;font-weight:normal;color:#000;transform:scaleX(0.8824);transform-origin:right;">0</div>
<div class="t" style="right:212.10px;top:223.63px;font-size:6.8px;line-height:7.82px;font-weight:normal;color:#000;transform:scaleX(0.8824);transform-origin:right;">0</div>
<div class="t" style="right:180.10px;top:223.63px;font-size:6.8px;line-height:7.82px;font-weight:normal;color:#000;transform:scaleX(0.8824);transform-origin:right;">0</div>
<div class="t" style="right:147.80px;top:223.63px;font-size:6.8px;line-height:7.82px;font-weight:normal;color:#000;transform:scaleX(0.8824);transform-origin:right;">0</div>
<div class="t" style="right:116.10px;top:223.63px;font-size:6.8px;line-height:7.82px;font-weight:normal;color:#000;transform:scaleX(0.8824);transform-origin:right;">0</div>
<div class="t" style="right:84.20px;top:223.63px;font-size:6.8px;line-height:7.82px;font-weight:normal;color:#000;transform:scaleX(0.8824);transform-origin:right;">0</div>
<div class="t" style="right:62.80px;top:223.63px;font-size:6.8px;line-height:7.82px;font-weight:normal;color:#000;transform:scaleX(0.8824);transform-origin:right;">0</div>
<div class="t" style="left:14.50px;top:233.13px;font-size:6.8px;line-height:7.82px;font-weight:normal;color:#000;transform:scaleX(0.8426);transform-origin:left;">AST1000</div>
<div class="t" style="left:47.00px;top:233.13px;font-size:6.8px;line-height:7.82px;font-weight:normal;color:#000;transform:scaleX(0.8029);transform-origin:left;">AST_COSTCTR</div>
<div class="t" style="left:93.90px;top:233.13px;font-size:6.8px;line-height:7.82px;font-weight:normal;color:#000;transform:scaleX(0.7985);transform-origin:left;">IESFA</div>
<div class="t" style="right:524.70px;top:233.13px;font-size:6.8px;line-height:7.82px;font-weight:normal;color:#000;transform:scaleX(0.8824);transform-origin:right;">-1000</div>
<div class="t" style="left:178.10px;top:233.13px;font-size:6.8px;line-height:7.82px;font-weight:normal;color:#000;transform:scaleX(0.9706);transform-origin:left;">March</div>
<div class="t" style="right:438.30px;top:233.13px;font-size:6.8px;line-height:7.82px;font-weight:normal;color:#000;transform:scaleX(0.8824);transform-origin:right;">0</div>
<div class="t" style="right:406.20px;top:233.13px;font-size:6.8px;line-height:7.82px;font-weight:normal;color:#000;transform:scaleX(0.8824);transform-origin:right;">0</div>
<div class="t" style="right:373.60px;top:233.13px;font-size:6.8px;line-height:7.82px;font-weight:normal;color:#000;transform:scaleX(0.8824);transform-origin:right;">0</div>
<div class="t" style="right:341.00px;top:233.13px;font-size:6.8px;line-height:7.82px;font-weight:normal;color:#000;transform:scaleX(0.8824);transform-origin:right;">0</div>
<div class="t" style="right:308.90px;top:233.13px;font-size:6.8px;line-height:7.82px;font-weight:normal;color:#000;transform:scaleX(0.8824);transform-origin:right;">0</div>
<div class="t" style="right:276.90px;top:233.13px;font-size:6.8px;line-height:7.82px;font-weight:normal;color:#000;transform:scaleX(0.8824);transform-origin:right;">0</div>
<div class="t" style="right:244.70px;top:233.13px;font-size:6.8px;line-height:7.82px;font-weight:normal;color:#000;transform:scaleX(0.8824);transform-origin:right;">-1000</div>
<div class="t" style="right:212.10px;top:233.13px;font-size:6.8px;line-height:7.82px;font-weight:normal;color:#000;transform:scaleX(0.8824);transform-origin:right;">0</div>
<div class="t" style="right:180.10px;top:233.13px;font-size:6.8px;line-height:7.82px;font-weight:normal;color:#000;transform:scaleX(0.8824);transform-origin:right;">0</div>
<div class="t" style="right:147.80px;top:233.13px;font-size:6.8px;line-height:7.82px;font-weight:normal;color:#000;transform:scaleX(0.8824);transform-origin:right;">0</div>
<div class="t" style="right:116.10px;top:233.13px;font-size:6.8px;line-height:7.82px;font-weight:normal;color:#000;transform:scaleX(0.8824);transform-origin:right;">0</div>
<div class="t" style="right:84.20px;top:233.13px;font-size:6.8px;line-height:7.82px;font-weight:normal;color:#000;transform:scaleX(0.8824);transform-origin:right;">0</div>
<div class="t" style="right:62.80px;top:233.13px;font-size:6.8px;line-height:7.82px;font-weight:normal;color:#000;transform:scaleX(0.8824);transform-origin:right;">0</div>
<div class="t" style="left:14.50px;top:242.63px;font-size:6.8px;line-height:7.82px;font-weight:normal;color:#000;transform:scaleX(0.8426);transform-origin:left;">AST1000</div>
<div class="t" style="left:47.00px;top:242.63px;font-size:6.8px;line-height:7.82px;font-weight:normal;color:#000;transform:scaleX(0.8029);transform-origin:left;">AST_COSTCTR</div>
<div class="t" style="left:93.90px;top:242.63px;font-size:6.8px;line-height:7.82px;font-weight:normal;color:#000;transform:scaleX(0.7985);transform-origin:left;">IESFA</div>
<div class="t" style="right:524.70px;top:242.63px;font-size:6.8px;line-height:7.82px;font-weight:normal;color:#000;transform:scaleX(0.8824);transform-origin:right;">-1000</div>
<div class="t" style="left:178.10px;top:242.63px;font-size:6.8px;line-height:7.82px;font-weight:normal;color:#000;transform:scaleX(0.9706);transform-origin:left;">April</div>
<div class="t" style="right:438.30px;top:242.63px;font-size:6.8px;line-height:7.82px;font-weight:normal;color:#000;transform:scaleX(0.8824);transform-origin:right;">0</div>
<div class="t" style="right:406.20px;top:242.63px;font-size:6.8px;line-height:7.82px;font-weight:normal;color:#000;transform:scaleX(0.8824);transform-origin:right;">0</div>
<div class="t" style="right:373.60px;top:242.63px;font-size:6.8px;line-height:7.82px;font-weight:normal;color:#000;transform:scaleX(0.8824);transform-origin:right;">0</div>
<div class="t" style="right:341.00px;top:242.63px;font-size:6.8px;line-height:7.82px;font-weight:normal;color:#000;transform:scaleX(0.8824);transform-origin:right;">0</div>
<div class="t" style="right:308.90px;top:242.63px;font-size:6.8px;line-height:7.82px;font-weight:normal;color:#000;transform:scaleX(0.8824);transform-origin:right;">0</div>
<div class="t" style="right:276.90px;top:242.63px;font-size:6.8px;line-height:7.82px;font-weight:normal;color:#000;transform:scaleX(0.8824);transform-origin:right;">0</div>
<div class="t" style="right:244.70px;top:242.63px;font-size:6.8px;line-height:7.82px;font-weight:normal;color:#000;transform:scaleX(0.8824);transform-origin:right;">0</div>
<div class="t" style="right:212.10px;top:242.63px;font-size:6.8px;line-height:7.82px;font-weight:normal;color:#000;transform:scaleX(0.8824);transform-origin:right;">-1000</div>
<div class="t" style="right:180.10px;top:242.63px;font-size:6.8px;line-height:7.82px;font-weight:normal;color:#000;transform:scaleX(0.8824);transform-origin:right;">0</div>
<div class="t" style="right:147.80px;top:242.63px;font-size:6.8px;line-height:7.82px;font-weight:normal;color:#000;transform:scaleX(0.8824);transform-origin:right;">0</div>
<div class="t" style="right:116.10px;top:242.63px;font-size:6.8px;line-height:7.82px;font-weight:normal;color:#000;transform:scaleX(0.8824);transform-origin:right;">0</div>
<div class="t" style="right:84.20px;top:242.63px;font-size:6.8px;line-height:7.82px;font-weight:normal;color:#000;transform:scaleX(0.8824);transform-origin:right;">0</div>
<div class="t" style="right:62.80px;top:242.63px;font-size:6.8px;line-height:7.82px;font-weight:normal;color:#000;transform:scaleX(0.8824);transform-origin:right;">0</div>
<div class="t" style="left:14.50px;top:252.13px;font-size:6.8px;line-height:7.82px;font-weight:normal;color:#000;transform:scaleX(0.8426);transform-origin:left;">AST1000</div>
<div class="t" style="left:47.00px;top:252.13px;font-size:6.8px;line-height:7.82px;font-weight:normal;color:#000;transform:scaleX(0.8029);transform-origin:left;">AST_COSTCTR</div>
<div class="t" style="left:93.90px;top:252.13px;font-size:6.8px;line-height:7.82px;font-weight:normal;color:#000;transform:scaleX(0.7985);transform-origin:left;">IESFA</div>
<div class="t" style="right:524.70px;top:252.13px;font-size:6.8px;line-height:7.82px;font-weight:normal;color:#000;transform:scaleX(0.8824);transform-origin:right;">-1000</div>
<div class="t" style="left:178.10px;top:252.13px;font-size:6.8px;line-height:7.82px;font-weight:normal;color:#000;transform:scaleX(0.9706);transform-origin:left;">May</div>
<div class="t" style="right:438.30px;top:252.13px;font-size:6.8px;line-height:7.82px;font-weight:normal;color:#000;transform:scaleX(0.8824);transform-origin:right;">0</div>
<div class="t" style="right:406.20px;top:252.13px;font-size:6.8px;line-height:7.82px;font-weight:normal;color:#000;transform:scaleX(0.8824);transform-origin:right;">0</div>
<div class="t" style="right:373.60px;top:252.13px;font-size:6.8px;line-height:7.82px;font-weight:normal;color:#000;transform:scaleX(0.8824);transform-origin:right;">0</div>
<div class="t" style="right:341.00px;top:252.13px;font-size:6.8px;line-height:7.82px;font-weight:normal;color:#000;transform:scaleX(0.8824);transform-origin:right;">0</div>
<div class="t" style="right:308.90px;top:252.13px;font-size:6.8px;line-height:7.82px;font-weight:normal;color:#000;transform:scaleX(0.8824);transform-origin:right;">0</div>
<div class="t" style="right:276.90px;top:252.13px;font-size:6.8px;line-height:7.82px;font-weight:normal;color:#000;transform:scaleX(0.8824);transform-origin:right;">0</div>
<div class="t" style="right:244.70px;top:252.13px;font-size:6.8px;line-height:7.82px;font-weight:normal;color:#000;transform:scaleX(0.8824);transform-origin:right;">0</div>
<div class="t" style="right:212.10px;top:252.13px;font-size:6.8px;line-height:7.82px;font-weight:normal;color:#000;transform:scaleX(0.8824);transform-origin:right;">0</div>
<div class="t" style="right:180.10px;top:252.13px;font-size:6.8px;line-height:7.82px;font-weight:normal;color:#000;transform:scaleX(0.8824);transform-origin:right;">-1000</div>
<div class="t" style="right:147.80px;top:252.13px;font-size:6.8px;line-height:7.82px;font-weight:normal;color:#000;transform:scaleX(0.8824);transform-origin:right;">0</div>
<div class="t" style="right:116.10px;top:252.13px;font-size:6.8px;line-height:7.82px;font-weight:normal;color:#000;transform:scaleX(0.8824);transform-origin:right;">0</div>
<div class="t" style="right:84.20px;top:252.13px;font-size:6.8px;line-height:7.82px;font-weight:normal;color:#000;transform:scaleX(0.8824);transform-origin:right;">0</div>
<div class="t" style="right:62.80px;top:252.13px;font-size:6.8px;line-height:7.82px;font-weight:normal;color:#000;transform:scaleX(0.8824);transform-origin:right;">0</div>
<div class="t" style="left:14.50px;top:261.62px;font-size:6.8px;line-height:7.82px;font-weight:normal;color:#000;transform:scaleX(0.8426);transform-origin:left;">AST1000</div>
<div class="t" style="left:47.00px;top:261.62px;font-size:6.8px;line-height:7.82px;font-weight:normal;color:#000;transform:scaleX(0.8029);transform-origin:left;">AST_COSTCTR</div>
<div class="t" style="left:93.90px;top:261.62px;font-size:6.8px;line-height:7.82px;font-weight:normal;color:#000;transform:scaleX(0.7985);transform-origin:left;">IESFA</div>
<div class="t" style="right:524.70px;top:261.62px;font-size:6.8px;line-height:7.82px;font-weight:normal;color:#000;transform:scaleX(0.8824);transform-origin:right;">-1000</div>
<div class="t" style="left:178.10px;top:261.62px;font-size:6.8px;line-height:7.82px;font-weight:normal;color:#000;transform:scaleX(0.9706);transform-origin:left;">June</div>
<div class="t" style="right:438.30px;top:261.62px;font-size:6.8px;line-height:7.82px;font-weight:normal;color:#000;transform:scaleX(0.8824);transform-origin:right;">0</div>
<div class="t" style="right:406.20px;top:261.62px;font-size:6.8px;line-height:7.82px;font-weight:normal;color:#000;transform:scaleX(0.8824);transform-origin:right;">0</div>
<div class="t" style="right:373.60px;top:261.62px;font-size:6.8px;line-height:7.82px;font-weight:normal;color:#000;transform:scaleX(0.8824);transform-origin:right;">0</div>
<div class="t" style="right:341.00px;top:261.62px;font-size:6.8px;line-height:7.82px;font-weight:normal;color:#000;transform:scaleX(0.8824);transform-origin:right;">0</div>
<div class="t" style="right:308.90px;top:261.62px;font-size:6.8px;line-height:7.82px;font-weight:normal;color:#000;transform:scaleX(0.8824);transform-origin:right;">0</div>
<div class="t" style="right:276.90px;top:261.62px;font-size:6.8px;line-height:7.82px;font-weight:normal;color:#000;transform:scaleX(0.8824);transform-origin:right;">0</div>
<div class="t" style="right:244.70px;top:261.62px;font-size:6.8px;line-height:7.82px;font-weight:normal;color:#000;transform:scaleX(0.8824);transform-origin:right;">0</div>
<div class="t" style="right:212.10px;top:261.62px;font-size:6.8px;line-height:7.82px;font-weight:normal;color:#000;transform:scaleX(0.8824);transform-origin:right;">0</div>
<div class="t" style="right:180.10px;top:261.62px;font-size:6.8px;line-height:7.82px;font-weight:normal;color:#000;transform:scaleX(0.8824);transform-origin:right;">0</div>
<div class="t" style="right:147.80px;top:261.62px;font-size:6.8px;line-height:7.82px;font-weight:normal;color:#000;transform:scaleX(0.8824);transform-origin:right;">-1000</div>
<div class="t" style="right:116.10px;top:261.62px;font-size:6.8px;line-height:7.82px;font-weight:normal;color:#000;transform:scaleX(0.8824);transform-origin:right;">0</div>
<div class="t" style="right:84.20px;top:261.62px;font-size:6.8px;line-height:7.82px;font-weight:normal;color:#000;transform:scaleX(0.8824);transform-origin:right;">0</div>
<div class="t" style="right:62.80px;top:261.62px;font-size:6.8px;line-height:7.82px;font-weight:normal;color:#000;transform:scaleX(0.8824);transform-origin:right;">0</div>
<div class="t" style="left:14.50px;top:271.12px;font-size:6.8px;line-height:7.82px;font-weight:normal;color:#000;transform:scaleX(0.8426);transform-origin:left;">AST1000</div>
<div class="t" style="left:47.00px;top:271.12px;font-size:6.8px;line-height:7.82px;font-weight:normal;color:#000;transform:scaleX(0.8029);transform-origin:left;">AST_COSTCTR</div>
<div class="t" style="left:93.90px;top:271.12px;font-size:6.8px;line-height:7.82px;font-weight:normal;color:#000;transform:scaleX(0.7985);transform-origin:left;">IESFA</div>
<div class="t" style="right:524.70px;top:271.12px;font-size:6.8px;line-height:7.82px;font-weight:normal;color:#000;transform:scaleX(0.8824);transform-origin:right;">-1000</div>
<div class="t" style="left:178.10px;top:271.12px;font-size:6.8px;line-height:7.82px;font-weight:normal;color:#000;transform:scaleX(0.9706);transform-origin:left;">July</div>
<div class="t" style="right:438.30px;top:271.12px;font-size:6.8px;line-height:7.82px;font-weight:normal;color:#000;transform:scaleX(0.8824);transform-origin:right;">0</div>
<div class="t" style="right:406.20px;top:271.12px;font-size:6.8px;line-height:7.82px;font-weight:normal;color:#000;transform:scaleX(0.8824);transform-origin:right;">0</div>
<div class="t" style="right:373.60px;top:271.12px;font-size:6.8px;line-height:7.82px;font-weight:normal;color:#000;transform:scaleX(0.8824);transform-origin:right;">0</div>
<div class="t" style="right:341.00px;top:271.12px;font-size:6.8px;line-height:7.82px;font-weight:normal;color:#000;transform:scaleX(0.8824);transform-origin:right;">0</div>
<div class="t" style="right:308.90px;top:271.12px;font-size:6.8px;line-height:7.82px;font-weight:normal;color:#000;transform:scaleX(0.8824);transform-origin:right;">0</div>
<div class="t" style="right:276.90px;top:271.12px;font-size:6.8px;line-height:7.82px;font-weight:normal;color:#000;transform:scaleX(0.8824);transform-origin:right;">0</div>
<div class="t" style="right:244.70px;top:271.12px;font-size:6.8px;line-height:7.82px;font-weight:normal;color:#000;transform:scaleX(0.8824);transform-origin:right;">0</div>
<div class="t" style="right:212.10px;top:271.12px;font-size:6.8px;line-height:7.82px;font-weight:normal;color:#000;transform:scaleX(0.8824);transform-origin:right;">0</div>
<div class="t" style="right:180.10px;top:271.12px;font-size:6.8px;line-height:7.82px;font-weight:normal;color:#000;transform:scaleX(0.8824);transform-origin:right;">0</div>
<div class="t" style="right:147.80px;top:271.12px;font-size:6.8px;line-height:7.82px;font-weight:normal;color:#000;transform:scaleX(0.8824);transform-origin:right;">0</div>
<div class="t" style="right:116.10px;top:271.12px;font-size:6.8px;line-height:7.82px;font-weight:normal;color:#000;transform:scaleX(0.8824);transform-origin:right;">-1000</div>
<div class="t" style="right:84.20px;top:271.12px;font-size:6.8px;line-height:7.82px;font-weight:normal;color:#000;transform:scaleX(0.8824);transform-origin:right;">0</div>
<div class="t" style="right:62.80px;top:271.12px;font-size:6.8px;line-height:7.82px;font-weight:normal;color:#000;transform:scaleX(0.8824);transform-origin:right;">0</div>
<div class="t" style="left:14.50px;top:280.62px;font-size:6.8px;line-height:7.82px;font-weight:normal;color:#000;transform:scaleX(0.8426);transform-origin:left;">AST1000</div>
<div class="t" style="left:47.00px;top:280.62px;font-size:6.8px;line-height:7.82px;font-weight:normal;color:#000;transform:scaleX(0.8029);transform-origin:left;">AST_COSTCTR</div>
<div class="t" style="left:93.90px;top:280.62px;font-size:6.8px;line-height:7.82px;font-weight:normal;color:#000;transform:scaleX(0.9);transform-origin:left;">ADMIN</div>
<div class="t" style="right:524.70px;top:280.62px;font-size:6.8px;line-height:7.82px;font-weight:normal;color:#000;transform:scaleX(0.8824);transform-origin:right;">750</div>
<div class="t" style="left:178.10px;top:280.62px;font-size:6.8px;line-height:7.82px;font-weight:normal;color:#000;transform:scaleX(0.9706);transform-origin:left;">August</div>
<div class="t" style="right:438.30px;top:280.62px;font-size:6.8px;line-height:7.82px;font-weight:normal;color:#000;transform:scaleX(0.8824);transform-origin:right;">0</div>
<div class="t" style="right:406.20px;top:280.62px;font-size:6.8px;line-height:7.82px;font-weight:normal;color:#000;transform:scaleX(0.8824);transform-origin:right;">0</div>
<div class="t" style="right:373.60px;top:280.62px;font-size:6.8px;line-height:7.82px;font-weight:normal;color:#000;transform:scaleX(0.8824);transform-origin:right;">0</div>
<div class="t" style="right:341.00px;top:280.62px;font-size:6.8px;line-height:7.82px;font-weight:normal;color:#000;transform:scaleX(0.8824);transform-origin:right;">0</div>
<div class="t" style="right:308.90px;top:280.62px;font-size:6.8px;line-height:7.82px;font-weight:normal;color:#000;transform:scaleX(0.8824);transform-origin:right;">0</div>
<div class="t" style="right:276.90px;top:280.62px;font-size:6.8px;line-height:7.82px;font-weight:normal;color:#000;transform:scaleX(0.8824);transform-origin:right;">0</div>
<div class="t" style="right:244.70px;top:280.62px;font-size:6.8px;line-height:7.82px;font-weight:normal;color:#000;transform:scaleX(0.8824);transform-origin:right;">0</div>
<div class="t" style="right:212.10px;top:280.62px;font-size:6.8px;line-height:7.82px;font-weight:normal;color:#000;transform:scaleX(0.8824);transform-origin:right;">0</div>
<div class="t" style="right:180.10px;top:280.62px;font-size:6.8px;line-height:7.82px;font-weight:normal;color:#000;transform:scaleX(0.8824);transform-origin:right;">0</div>
<div class="t" style="right:147.80px;top:280.62px;font-size:6.8px;line-height:7.82px;font-weight:normal;color:#000;transform:scaleX(0.8824);transform-origin:right;">0</div>
<div class="t" style="right:116.10px;top:280.62px;font-size:6.8px;line-height:7.82px;font-weight:normal;color:#000;transform:scaleX(0.8824);transform-origin:right;">0</div>
<div class="t" style="right:84.20px;top:280.62px;font-size:6.8px;line-height:7.82px;font-weight:normal;color:#000;transform:scaleX(0.8824);transform-origin:right;">750</div>
<div class="t" style="right:62.80px;top:280.62px;font-size:6.8px;line-height:7.82px;font-weight:normal;color:#000;transform:scaleX(0.8824);transform-origin:right;">0</div>
<div class="t" style="left:14.50px;top:290.12px;font-size:6.8px;line-height:7.82px;font-weight:normal;color:#000;transform:scaleX(0.8426);transform-origin:left;">AST4010</div>
<div class="t" style="left:47.00px;top:290.12px;font-size:6.8px;line-height:7.82px;font-weight:normal;color:#000;transform:scaleX(0.8029);transform-origin:left;">AST_COSTCTR</div>
<div class="t" style="left:93.90px;top:290.12px;font-size:6.8px;line-height:7.82px;font-weight:normal;color:#000;transform:scaleX(0.9);transform-origin:left;">ADMIN</div>
<div class="t" style="right:524.70px;top:290.12px;font-size:6.8px;line-height:7.82px;font-weight:normal;color:#000;transform:scaleX(0.8824);transform-origin:right;">750</div>
<div class="t" style="left:178.10px;top:290.12px;font-size:6.8px;line-height:7.82px;font-weight:normal;color:#000;transform:scaleX(0.9706);transform-origin:left;">September</div>
<div class="t" style="right:438.30px;top:290.12px;font-size:6.8px;line-height:7.82px;font-weight:normal;color:#000;transform:scaleX(0.8824);transform-origin:right;">750</div>
<div class="t" style="right:406.20px;top:290.12px;font-size:6.8px;line-height:7.82px;font-weight:normal;color:#000;transform:scaleX(0.8824);transform-origin:right;">0</div>
<div class="t" style="right:373.60px;top:290.12px;font-size:6.8px;line-height:7.82px;font-weight:normal;color:#000;transform:scaleX(0.8824);transform-origin:right;">0</div>
<div class="t" style="right:341.00px;top:290.12px;font-size:6.8px;line-height:7.82px;font-weight:normal;color:#000;transform:scaleX(0.8824);transform-origin:right;">0</div>
<div class="t" style="right:308.90px;top:290.12px;font-size:6.8px;line-height:7.82px;font-weight:normal;color:#000;transform:scaleX(0.8824);transform-origin:right;">0</div>
<div class="t" style="right:276.90px;top:290.12px;font-size:6.8px;line-height:7.82px;font-weight:normal;color:#000;transform:scaleX(0.8824);transform-origin:right;">0</div>
<div class="t" style="right:244.70px;top:290.12px;font-size:6.8px;line-height:7.82px;font-weight:normal;color:#000;transform:scaleX(0.8824);transform-origin:right;">0</div>
<div class="t" style="right:212.10px;top:290.12px;font-size:6.8px;line-height:7.82px;font-weight:normal;color:#000;transform:scaleX(0.8824);transform-origin:right;">0</div>
<div class="t" style="right:180.10px;top:290.12px;font-size:6.8px;line-height:7.82px;font-weight:normal;color:#000;transform:scaleX(0.8824);transform-origin:right;">0</div>
<div class="t" style="right:147.80px;top:290.12px;font-size:6.8px;line-height:7.82px;font-weight:normal;color:#000;transform:scaleX(0.8824);transform-origin:right;">0</div>
<div class="t" style="right:116.10px;top:290.12px;font-size:6.8px;line-height:7.82px;font-weight:normal;color:#000;transform:scaleX(0.8824);transform-origin:right;">0</div>
<div class="t" style="right:84.20px;top:290.12px;font-size:6.8px;line-height:7.82px;font-weight:normal;color:#000;transform:scaleX(0.8824);transform-origin:right;">0</div>
<div class="t" style="right:62.80px;top:290.12px;font-size:6.8px;line-height:7.82px;font-weight:normal;color:#000;transform:scaleX(0.8824);transform-origin:right;">0</div>
<div class="t" style="left:14.50px;top:299.62px;font-size:6.8px;line-height:7.82px;font-weight:normal;color:#000;transform:scaleX(0.8426);transform-origin:left;">AST4010</div>
<div class="t" style="left:47.00px;top:299.62px;font-size:6.8px;line-height:7.82px;font-weight:normal;color:#000;transform:scaleX(0.8029);transform-origin:left;">AST_COSTCTR</div>
<div class="t" style="left:93.90px;top:299.62px;font-size:6.8px;line-height:7.82px;font-weight:normal;color:#000;transform:scaleX(0.9);transform-origin:left;">ADMIN</div>
<div class="t" style="right:524.70px;top:299.62px;font-size:6.8px;line-height:7.82px;font-weight:normal;color:#000;transform:scaleX(0.8824);transform-origin:right;">750</div>
<div class="t" style="left:178.10px;top:299.62px;font-size:6.8px;line-height:7.82px;font-weight:normal;color:#000;transform:scaleX(0.9706);transform-origin:left;">October</div>
<div class="t" style="right:438.30px;top:299.62px;font-size:6.8px;line-height:7.82px;font-weight:normal;color:#000;transform:scaleX(0.8824);transform-origin:right;">0</div>
<div class="t" style="right:406.20px;top:299.62px;font-size:6.8px;line-height:7.82px;font-weight:normal;color:#000;transform:scaleX(0.8824);transform-origin:right;">750</div>
<div class="t" style="right:373.60px;top:299.62px;font-size:6.8px;line-height:7.82px;font-weight:normal;color:#000;transform:scaleX(0.8824);transform-origin:right;">0</div>
<div class="t" style="right:341.00px;top:299.62px;font-size:6.8px;line-height:7.82px;font-weight:normal;color:#000;transform:scaleX(0.8824);transform-origin:right;">0</div>
<div class="t" style="right:308.90px;top:299.62px;font-size:6.8px;line-height:7.82px;font-weight:normal;color:#000;transform:scaleX(0.8824);transform-origin:right;">0</div>
<div class="t" style="right:276.90px;top:299.62px;font-size:6.8px;line-height:7.82px;font-weight:normal;color:#000;transform:scaleX(0.8824);transform-origin:right;">0</div>
<div class="t" style="right:244.70px;top:299.62px;font-size:6.8px;line-height:7.82px;font-weight:normal;color:#000;transform:scaleX(0.8824);transform-origin:right;">0</div>
<div class="t" style="right:212.10px;top:299.62px;font-size:6.8px;line-height:7.82px;font-weight:normal;color:#000;transform:scaleX(0.8824);transform-origin:right;">0</div>
<div class="t" style="right:180.10px;top:299.62px;font-size:6.8px;line-height:7.82px;font-weight:normal;color:#000;transform:scaleX(0.8824);transform-origin:right;">0</div>
<div class="t" style="right:147.80px;top:299.62px;font-size:6.8px;line-height:7.82px;font-weight:normal;color:#000;transform:scaleX(0.8824);transform-origin:right;">0</div>
<div class="t" style="right:116.10px;top:299.62px;font-size:6.8px;line-height:7.82px;font-weight:normal;color:#000;transform:scaleX(0.8824);transform-origin:right;">0</div>
<div class="t" style="right:84.20px;top:299.62px;font-size:6.8px;line-height:7.82px;font-weight:normal;color:#000;transform:scaleX(0.8824);transform-origin:right;">0</div>
<div class="t" style="right:62.80px;top:299.62px;font-size:6.8px;line-height:7.82px;font-weight:normal;color:#000;transform:scaleX(0.8824);transform-origin:right;">0</div>
<div class="t" style="left:14.50px;top:309.12px;font-size:6.8px;line-height:7.82px;font-weight:normal;color:#000;transform:scaleX(0.8426);transform-origin:left;">AST4010</div>
<div class="t" style="left:47.00px;top:309.12px;font-size:6.8px;line-height:7.82px;font-weight:normal;color:#000;transform:scaleX(0.8029);transform-origin:left;">AST_COSTCTR</div>
<div class="t" style="left:93.90px;top:309.12px;font-size:6.8px;line-height:7.82px;font-weight:normal;color:#000;transform:scaleX(0.9);transform-origin:left;">ADMIN</div>
<div class="t" style="right:524.70px;top:309.12px;font-size:6.8px;line-height:7.82px;font-weight:normal;color:#000;transform:scaleX(0.8824);transform-origin:right;">750</div>
<div class="t" style="left:178.10px;top:309.12px;font-size:6.8px;line-height:7.82px;font-weight:normal;color:#000;transform:scaleX(0.9706);transform-origin:left;">November</div>
<div class="t" style="right:438.30px;top:309.12px;font-size:6.8px;line-height:7.82px;font-weight:normal;color:#000;transform:scaleX(0.8824);transform-origin:right;">0</div>
<div class="t" style="right:406.20px;top:309.12px;font-size:6.8px;line-height:7.82px;font-weight:normal;color:#000;transform:scaleX(0.8824);transform-origin:right;">0</div>
<div class="t" style="right:373.60px;top:309.12px;font-size:6.8px;line-height:7.82px;font-weight:normal;color:#000;transform:scaleX(0.8824);transform-origin:right;">750</div>
<div class="t" style="right:341.00px;top:309.12px;font-size:6.8px;line-height:7.82px;font-weight:normal;color:#000;transform:scaleX(0.8824);transform-origin:right;">0</div>
<div class="t" style="right:308.90px;top:309.12px;font-size:6.8px;line-height:7.82px;font-weight:normal;color:#000;transform:scaleX(0.8824);transform-origin:right;">0</div>
<div class="t" style="right:276.90px;top:309.12px;font-size:6.8px;line-height:7.82px;font-weight:normal;color:#000;transform:scaleX(0.8824);transform-origin:right;">0</div>
<div class="t" style="right:244.70px;top:309.12px;font-size:6.8px;line-height:7.82px;font-weight:normal;color:#000;transform:scaleX(0.8824);transform-origin:right;">0</div>
<div class="t" style="right:212.10px;top:309.12px;font-size:6.8px;line-height:7.82px;font-weight:normal;color:#000;transform:scaleX(0.8824);transform-origin:right;">0</div>
<div class="t" style="right:180.10px;top:309.12px;font-size:6.8px;line-height:7.82px;font-weight:normal;color:#000;transform:scaleX(0.8824);transform-origin:right;">0</div>
<div class="t" style="right:147.80px;top:309.12px;font-size:6.8px;line-height:7.82px;font-weight:normal;color:#000;transform:scaleX(0.8824);transform-origin:right;">0</div>
<div class="t" style="right:116.10px;top:309.12px;font-size:6.8px;line-height:7.82px;font-weight:normal;color:#000;transform:scaleX(0.8824);transform-origin:right;">0</div>
<div class="t" style="right:84.20px;top:309.12px;font-size:6.8px;line-height:7.82px;font-weight:normal;color:#000;transform:scaleX(0.8824);transform-origin:right;">0</div>
<div class="t" style="right:62.80px;top:309.12px;font-size:6.8px;line-height:7.82px;font-weight:normal;color:#000;transform:scaleX(0.8824);transform-origin:right;">0</div>
<div class="t" style="left:14.50px;top:318.62px;font-size:6.8px;line-height:7.82px;font-weight:normal;color:#000;transform:scaleX(0.8426);transform-origin:left;">AST4010</div>
<div class="t" style="left:47.00px;top:318.62px;font-size:6.8px;line-height:7.82px;font-weight:normal;color:#000;transform:scaleX(0.8029);transform-origin:left;">AST_COSTCTR</div>
<div class="t" style="left:93.90px;top:318.62px;font-size:6.8px;line-height:7.82px;font-weight:normal;color:#000;transform:scaleX(0.9);transform-origin:left;">ADMIN</div>
<div class="t" style="right:524.70px;top:318.62px;font-size:6.8px;line-height:7.82px;font-weight:normal;color:#000;transform:scaleX(0.8824);transform-origin:right;">750</div>
<div class="t" style="left:178.10px;top:318.62px;font-size:6.8px;line-height:7.82px;font-weight:normal;color:#000;transform:scaleX(0.9706);transform-origin:left;">December</div>
<div class="t" style="right:438.30px;top:318.62px;font-size:6.8px;line-height:7.82px;font-weight:normal;color:#000;transform:scaleX(0.8824);transform-origin:right;">0</div>
<div class="t" style="right:406.20px;top:318.62px;font-size:6.8px;line-height:7.82px;font-weight:normal;color:#000;transform:scaleX(0.8824);transform-origin:right;">0</div>
<div class="t" style="right:373.60px;top:318.62px;font-size:6.8px;line-height:7.82px;font-weight:normal;color:#000;transform:scaleX(0.8824);transform-origin:right;">0</div>
<div class="t" style="right:341.00px;top:318.62px;font-size:6.8px;line-height:7.82px;font-weight:normal;color:#000;transform:scaleX(0.8824);transform-origin:right;">750</div>
<div class="t" style="right:308.90px;top:318.62px;font-size:6.8px;line-height:7.82px;font-weight:normal;color:#000;transform:scaleX(0.8824);transform-origin:right;">0</div>
<div class="t" style="right:276.90px;top:318.62px;font-size:6.8px;line-height:7.82px;font-weight:normal;color:#000;transform:scaleX(0.8824);transform-origin:right;">0</div>
<div class="t" style="right:244.70px;top:318.62px;font-size:6.8px;line-height:7.82px;font-weight:normal;color:#000;transform:scaleX(0.8824);transform-origin:right;">0</div>
<div class="t" style="right:212.10px;top:318.62px;font-size:6.8px;line-height:7.82px;font-weight:normal;color:#000;transform:scaleX(0.8824);transform-origin:right;">0</div>
<div class="t" style="right:180.10px;top:318.62px;font-size:6.8px;line-height:7.82px;font-weight:normal;color:#000;transform:scaleX(0.8824);transform-origin:right;">0</div>
<div class="t" style="right:147.80px;top:318.62px;font-size:6.8px;line-height:7.82px;font-weight:normal;color:#000;transform:scaleX(0.8824);transform-origin:right;">0</div>
<div class="t" style="right:116.10px;top:318.62px;font-size:6.8px;line-height:7.82px;font-weight:normal;color:#000;transform:scaleX(0.8824);transform-origin:right;">0</div>
<div class="t" style="right:84.20px;top:318.62px;font-size:6.8px;line-height:7.82px;font-weight:normal;color:#000;transform:scaleX(0.8824);transform-origin:right;">0</div>
<div class="t" style="right:62.80px;top:318.62px;font-size:6.8px;line-height:7.82px;font-weight:normal;color:#000;transform:scaleX(0.8824);transform-origin:right;">0</div>
<div class="t" style="left:14.50px;top:328.12px;font-size:6.8px;line-height:7.82px;font-weight:normal;color:#000;transform:scaleX(0.8426);transform-origin:left;">AST4010</div>
<div class="t" style="left:47.00px;top:328.12px;font-size:6.8px;line-height:7.82px;font-weight:normal;color:#000;transform:scaleX(0.8029);transform-origin:left;">AST_COSTCTR</div>
<div class="t" style="left:93.90px;top:328.12px;font-size:6.8px;line-height:7.82px;font-weight:normal;color:#000;transform:scaleX(0.9);transform-origin:left;">ADMIN</div>
<div class="t" style="right:524.70px;top:328.12px;font-size:6.8px;line-height:7.82px;font-weight:normal;color:#000;transform:scaleX(0.8824);transform-origin:right;">750</div>
<div class="t" style="left:178.10px;top:328.12px;font-size:6.8px;line-height:7.82px;font-weight:normal;color:#000;transform:scaleX(0.9706);transform-origin:left;">January</div>
<div class="t" style="right:438.30px;top:328.12px;font-size:6.8px;line-height:7.82px;font-weight:normal;color:#000;transform:scaleX(0.8824);transform-origin:right;">0</div>
<div class="t" style="right:406.20px;top:328.12px;font-size:6.8px;line-height:7.82px;font-weight:normal;color:#000;transform:scaleX(0.8824);transform-origin:right;">0</div>
<div class="t" style="right:373.60px;top:328.12px;font-size:6.8px;line-height:7.82px;font-weight:normal;color:#000;transform:scaleX(0.8824);transform-origin:right;">0</div>
<div class="t" style="right:341.00px;top:328.12px;font-size:6.8px;line-height:7.82px;font-weight:normal;color:#000;transform:scaleX(0.8824);transform-origin:right;">0</div>
<div class="t" style="right:308.90px;top:328.12px;font-size:6.8px;line-height:7.82px;font-weight:normal;color:#000;transform:scaleX(0.8824);transform-origin:right;">750</div>
<div class="t" style="right:276.90px;top:328.12px;font-size:6.8px;line-height:7.82px;font-weight:normal;color:#000;transform:scaleX(0.8824);transform-origin:right;">0</div>
<div class="t" style="right:244.70px;top:328.12px;font-size:6.8px;line-height:7.82px;font-weight:normal;color:#000;transform:scaleX(0.8824);transform-origin:right;">0</div>
<div class="t" style="right:212.10px;top:328.12px;font-size:6.8px;line-height:7.82px;font-weight:normal;color:#000;transform:scaleX(0.8824);transform-origin:right;">0</div>
<div class="t" style="right:180.10px;top:328.12px;font-size:6.8px;line-height:7.82px;font-weight:normal;color:#000;transform:scaleX(0.8824);transform-origin:right;">0</div>
<div class="t" style="right:147.80px;top:328.12px;font-size:6.8px;line-height:7.82px;font-weight:normal;color:#000;transform:scaleX(0.8824);transform-origin:right;">0</div>
<div class="t" style="right:116.10px;top:328.12px;font-size:6.8px;line-height:7.82px;font-weight:normal;color:#000;transform:scaleX(0.8824);transform-origin:right;">0</div>
<div class="t" style="right:84.20px;top:328.12px;font-size:6.8px;line-height:7.82px;font-weight:normal;color:#000;transform:scaleX(0.8824);transform-origin:right;">0</div>
<div class="t" style="right:62.80px;top:328.12px;font-size:6.8px;line-height:7.82px;font-weight:normal;color:#000;transform:scaleX(0.8824);transform-origin:right;">0</div>
<div class="t" style="left:14.50px;top:337.62px;font-size:6.8px;line-height:7.82px;font-weight:normal;color:#000;transform:scaleX(0.8426);transform-origin:left;">AST4010</div>
<div class="t" style="left:47.00px;top:337.62px;font-size:6.8px;line-height:7.82px;font-weight:normal;color:#000;transform:scaleX(0.8029);transform-origin:left;">AST_COSTCTR</div>
<div class="t" style="left:93.90px;top:337.62px;font-size:6.8px;line-height:7.82px;font-weight:normal;color:#000;transform:scaleX(0.9);transform-origin:left;">ADMIN</div>
<div class="t" style="right:524.70px;top:337.62px;font-size:6.8px;line-height:7.82px;font-weight:normal;color:#000;transform:scaleX(0.8824);transform-origin:right;">750</div>
<div class="t" style="left:178.10px;top:337.62px;font-size:6.8px;line-height:7.82px;font-weight:normal;color:#000;transform:scaleX(0.9706);transform-origin:left;">February</div>
<div class="t" style="right:438.30px;top:337.62px;font-size:6.8px;line-height:7.82px;font-weight:normal;color:#000;transform:scaleX(0.8824);transform-origin:right;">0</div>
<div class="t" style="right:406.20px;top:337.62px;font-size:6.8px;line-height:7.82px;font-weight:normal;color:#000;transform:scaleX(0.8824);transform-origin:right;">0</div>
<div class="t" style="right:373.60px;top:337.62px;font-size:6.8px;line-height:7.82px;font-weight:normal;color:#000;transform:scaleX(0.8824);transform-origin:right;">0</div>
<div class="t" style="right:341.00px;top:337.62px;font-size:6.8px;line-height:7.82px;font-weight:normal;color:#000;transform:scaleX(0.8824);transform-origin:right;">0</div>
<div class="t" style="right:308.90px;top:337.62px;font-size:6.8px;line-height:7.82px;font-weight:normal;color:#000;transform:scaleX(0.8824);transform-origin:right;">0</div>
<div class="t" style="right:276.90px;top:337.62px;font-size:6.8px;line-height:7.82px;font-weight:normal;color:#000;transform:scaleX(0.8824);transform-origin:right;">750</div>
<div class="t" style="right:244.70px;top:337.62px;font-size:6.8px;line-height:7.82px;font-weight:normal;color:#000;transform:scaleX(0.8824);transform-origin:right;">0</div>
<div class="t" style="right:212.10px;top:337.62px;font-size:6.8px;line-height:7.82px;font-weight:normal;color:#000;transform:scaleX(0.8824);transform-origin:right;">0</div>
<div class="t" style="right:180.10px;top:337.62px;font-size:6.8px;line-height:7.82px;font-weight:normal;color:#000;transform:scaleX(0.8824);transform-origin:right;">0</div>
<div class="t" style="right:147.80px;top:337.62px;font-size:6.8px;line-height:7.82px;font-weight:normal;color:#000;transform:scaleX(0.8824);transform-origin:right;">0</div>
<div class="t" style="right:116.10px;top:337.62px;font-size:6.8px;line-height:7.82px;font-weight:normal;color:#000;transform:scaleX(0.8824);transform-origin:right;">0</div>
<div class="t" style="right:84.20px;top:337.62px;font-size:6.8px;line-height:7.82px;font-weight:normal;color:#000;transform:scaleX(0.8824);transform-origin:right;">0</div>
<div class="t" style="right:62.80px;top:337.62px;font-size:6.8px;line-height:7.82px;font-weight:normal;color:#000;transform:scaleX(0.8824);transform-origin:right;">0</div>
<div class="t" style="left:14.50px;top:347.12px;font-size:6.8px;line-height:7.82px;font-weight:normal;color:#000;transform:scaleX(0.8426);transform-origin:left;">AST4010</div>
<div class="t" style="left:47.00px;top:347.12px;font-size:6.8px;line-height:7.82px;font-weight:normal;color:#000;transform:scaleX(0.8029);transform-origin:left;">AST_COSTCTR</div>
<div class="t" style="left:93.90px;top:347.12px;font-size:6.8px;line-height:7.82px;font-weight:normal;color:#000;transform:scaleX(0.9);transform-origin:left;">ADMIN</div>
<div class="t" style="right:524.70px;top:347.12px;font-size:6.8px;line-height:7.82px;font-weight:normal;color:#000;transform:scaleX(0.8824);transform-origin:right;">750</div>
<div class="t" style="left:178.10px;top:347.12px;font-size:6.8px;line-height:7.82px;font-weight:normal;color:#000;transform:scaleX(0.9706);transform-origin:left;">March</div>
<div class="t" style="right:438.30px;top:347.12px;font-size:6.8px;line-height:7.82px;font-weight:normal;color:#000;transform:scaleX(0.8824);transform-origin:right;">0</div>
<div class="t" style="right:406.20px;top:347.12px;font-size:6.8px;line-height:7.82px;font-weight:normal;color:#000;transform:scaleX(0.8824);transform-origin:right;">0</div>
<div class="t" style="right:373.60px;top:347.12px;font-size:6.8px;line-height:7.82px;font-weight:normal;color:#000;transform:scaleX(0.8824);transform-origin:right;">0</div>
<div class="t" style="right:341.00px;top:347.12px;font-size:6.8px;line-height:7.82px;font-weight:normal;color:#000;transform:scaleX(0.8824);transform-origin:right;">0</div>
<div class="t" style="right:308.90px;top:347.12px;font-size:6.8px;line-height:7.82px;font-weight:normal;color:#000;transform:scaleX(0.8824);transform-origin:right;">0</div>
<div class="t" style="right:276.90px;top:347.12px;font-size:6.8px;line-height:7.82px;font-weight:normal;color:#000;transform:scaleX(0.8824);transform-origin:right;">0</div>
<div class="t" style="right:244.70px;top:347.12px;font-size:6.8px;line-height:7.82px;font-weight:normal;color:#000;transform:scaleX(0.8824);transform-origin:right;">750</div>
<div class="t" style="right:212.10px;top:347.12px;font-size:6.8px;line-height:7.82px;font-weight:normal;color:#000;transform:scaleX(0.8824);transform-origin:right;">0</div>
<div class="t" style="right:180.10px;top:347.12px;font-size:6.8px;line-height:7.82px;font-weight:normal;color:#000;transform:scaleX(0.8824);transform-origin:right;">0</div>
<div class="t" style="right:147.80px;top:347.12px;font-size:6.8px;line-height:7.82px;font-weight:normal;color:#000;transform:scaleX(0.8824);transform-origin:right;">0</div>
<div class="t" style="right:116.10px;top:347.12px;font-size:6.8px;line-height:7.82px;font-weight:normal;color:#000;transform:scaleX(0.8824);transform-origin:right;">0</div>
<div class="t" style="right:84.20px;top:347.12px;font-size:6.8px;line-height:7.82px;font-weight:normal;color:#000;transform:scaleX(0.8824);transform-origin:right;">0</div>
<div class="t" style="right:62.80px;top:347.12px;font-size:6.8px;line-height:7.82px;font-weight:normal;color:#000;transform:scaleX(0.8824);transform-origin:right;">0</div>
<div class="t" style="left:14.50px;top:356.61px;font-size:6.8px;line-height:7.82px;font-weight:normal;color:#000;transform:scaleX(0.8426);transform-origin:left;">AST4010</div>
<div class="t" style="left:47.00px;top:356.61px;font-size:6.8px;line-height:7.82px;font-weight:normal;color:#000;transform:scaleX(0.8029);transform-origin:left;">AST_COSTCTR</div>
<div class="t" style="left:93.90px;top:356.61px;font-size:6.8px;line-height:7.82px;font-weight:normal;color:#000;transform:scaleX(0.9);transform-origin:left;">ADMIN</div>
<div class="t" style="right:524.70px;top:356.61px;font-size:6.8px;line-height:7.82px;font-weight:normal;color:#000;transform:scaleX(0.8824);transform-origin:right;">750</div>
<div class="t" style="left:178.10px;top:356.61px;font-size:6.8px;line-height:7.82px;font-weight:normal;color:#000;transform:scaleX(0.9706);transform-origin:left;">April</div>
<div class="t" style="right:438.30px;top:356.61px;font-size:6.8px;line-height:7.82px;font-weight:normal;color:#000;transform:scaleX(0.8824);transform-origin:right;">0</div>
<div class="t" style="right:406.20px;top:356.61px;font-size:6.8px;line-height:7.82px;font-weight:normal;color:#000;transform:scaleX(0.8824);transform-origin:right;">0</div>
<div class="t" style="right:373.60px;top:356.61px;font-size:6.8px;line-height:7.82px;font-weight:normal;color:#000;transform:scaleX(0.8824);transform-origin:right;">0</div>
<div class="t" style="right:341.00px;top:356.61px;font-size:6.8px;line-height:7.82px;font-weight:normal;color:#000;transform:scaleX(0.8824);transform-origin:right;">0</div>
<div class="t" style="right:308.90px;top:356.61px;font-size:6.8px;line-height:7.82px;font-weight:normal;color:#000;transform:scaleX(0.8824);transform-origin:right;">0</div>
<div class="t" style="right:276.90px;top:356.61px;font-size:6.8px;line-height:7.82px;font-weight:normal;color:#000;transform:scaleX(0.8824);transform-origin:right;">0</div>
<div class="t" style="right:244.70px;top:356.61px;font-size:6.8px;line-height:7.82px;font-weight:normal;color:#000;transform:scaleX(0.8824);transform-origin:right;">0</div>
<div class="t" style="right:212.10px;top:356.61px;font-size:6.8px;line-height:7.82px;font-weight:normal;color:#000;transform:scaleX(0.8824);transform-origin:right;">750</div>
<div class="t" style="right:180.10px;top:356.61px;font-size:6.8px;line-height:7.82px;font-weight:normal;color:#000;transform:scaleX(0.8824);transform-origin:right;">0</div>
<div class="t" style="right:147.80px;top:356.61px;font-size:6.8px;line-height:7.82px;font-weight:normal;color:#000;transform:scaleX(0.8824);transform-origin:right;">0</div>
<div class="t" style="right:116.10px;top:356.61px;font-size:6.8px;line-height:7.82px;font-weight:normal;color:#000;transform:scaleX(0.8824);transform-origin:right;">0</div>
<div class="t" style="right:84.20px;top:356.61px;font-size:6.8px;line-height:7.82px;font-weight:normal;color:#000;transform:scaleX(0.8824);transform-origin:right;">0</div>
<div class="t" style="right:62.80px;top:356.61px;font-size:6.8px;line-height:7.82px;font-weight:normal;color:#000;transform:scaleX(0.8824);transform-origin:right;">0</div>
<div class="t" style="left:14.50px;top:366.11px;font-size:6.8px;line-height:7.82px;font-weight:normal;color:#000;transform:scaleX(0.8426);transform-origin:left;">AST4010</div>
<div class="t" style="left:47.00px;top:366.11px;font-size:6.8px;line-height:7.82px;font-weight:normal;color:#000;transform:scaleX(0.8029);transform-origin:left;">AST_COSTCTR</div>
<div class="t" style="left:93.90px;top:366.11px;font-size:6.8px;line-height:7.82px;font-weight:normal;color:#000;transform:scaleX(0.9);transform-origin:left;">ADMIN</div>
<div class="t" style="right:524.70px;top:366.11px;font-size:6.8px;line-height:7.82px;font-weight:normal;color:#000;transform:scaleX(0.8824);transform-origin:right;">750</div>
<div class="t" style="left:178.10px;top:366.11px;font-size:6.8px;line-height:7.82px;font-weight:normal;color:#000;transform:scaleX(0.9706);transform-origin:left;">May</div>
<div class="t" style="right:438.30px;top:366.11px;font-size:6.8px;line-height:7.82px;font-weight:normal;color:#000;transform:scaleX(0.8824);transform-origin:right;">0</div>
<div class="t" style="right:406.20px;top:366.11px;font-size:6.8px;line-height:7.82px;font-weight:normal;color:#000;transform:scaleX(0.8824);transform-origin:right;">0</div>
<div class="t" style="right:373.60px;top:366.11px;font-size:6.8px;line-height:7.82px;font-weight:normal;color:#000;transform:scaleX(0.8824);transform-origin:right;">0</div>
<div class="t" style="right:341.00px;top:366.11px;font-size:6.8px;line-height:7.82px;font-weight:normal;color:#000;transform:scaleX(0.8824);transform-origin:right;">0</div>
<div class="t" style="right:308.90px;top:366.11px;font-size:6.8px;line-height:7.82px;font-weight:normal;color:#000;transform:scaleX(0.8824);transform-origin:right;">0</div>
<div class="t" style="right:276.90px;top:366.11px;font-size:6.8px;line-height:7.82px;font-weight:normal;color:#000;transform:scaleX(0.8824);transform-origin:right;">0</div>
<div class="t" style="right:244.70px;top:366.11px;font-size:6.8px;line-height:7.82px;font-weight:normal;color:#000;transform:scaleX(0.8824);transform-origin:right;">0</div>
<div class="t" style="right:212.10px;top:366.11px;font-size:6.8px;line-height:7.82px;font-weight:normal;color:#000;transform:scaleX(0.8824);transform-origin:right;">0</div>
<div class="t" style="right:180.10px;top:366.11px;font-size:6.8px;line-height:7.82px;font-weight:normal;color:#000;transform:scaleX(0.8824);transform-origin:right;">750</div>
<div class="t" style="right:147.80px;top:366.11px;font-size:6.8px;line-height:7.82px;font-weight:normal;color:#000;transform:scaleX(0.8824);transform-origin:right;">0</div>
<div class="t" style="right:116.10px;top:366.11px;font-size:6.8px;line-height:7.82px;font-weight:normal;color:#000;transform:scaleX(0.8824);transform-origin:right;">0</div>
<div class="t" style="right:84.20px;top:366.11px;font-size:6.8px;line-height:7.82px;font-weight:normal;color:#000;transform:scaleX(0.8824);transform-origin:right;">0</div>
<div class="t" style="right:62.80px;top:366.11px;font-size:6.8px;line-height:7.82px;font-weight:normal;color:#000;transform:scaleX(0.8824);transform-origin:right;">0</div>
<div class="t" style="left:14.50px;top:375.61px;font-size:6.8px;line-height:7.82px;font-weight:normal;color:#000;transform:scaleX(0.8426);transform-origin:left;">AST4010</div>
<div class="t" style="left:47.00px;top:375.61px;font-size:6.8px;line-height:7.82px;font-weight:normal;color:#000;transform:scaleX(0.8029);transform-origin:left;">AST_COSTCTR</div>
<div class="t" style="left:93.90px;top:375.61px;font-size:6.8px;line-height:7.82px;font-weight:normal;color:#000;transform:scaleX(0.9);transform-origin:left;">ADMIN</div>
<div class="t" style="right:524.70px;top:375.61px;font-size:6.8px;line-height:7.82px;font-weight:normal;color:#000;transform:scaleX(0.8824);transform-origin:right;">750</div>
<div class="t" style="left:178.10px;top:375.61px;font-size:6.8px;line-height:7.82px;font-weight:normal;color:#000;transform:scaleX(0.9706);transform-origin:left;">June</div>
<div class="t" style="right:438.30px;top:375.61px;font-size:6.8px;line-height:7.82px;font-weight:normal;color:#000;transform:scaleX(0.8824);transform-origin:right;">0</div>
<div class="t" style="right:406.20px;top:375.61px;font-size:6.8px;line-height:7.82px;font-weight:normal;color:#000;transform:scaleX(0.8824);transform-origin:right;">0</div>
<div class="t" style="right:373.60px;top:375.61px;font-size:6.8px;line-height:7.82px;font-weight:normal;color:#000;transform:scaleX(0.8824);transform-origin:right;">0</div>
<div class="t" style="right:341.00px;top:375.61px;font-size:6.8px;line-height:7.82px;font-weight:normal;color:#000;transform:scaleX(0.8824);transform-origin:right;">0</div>
<div class="t" style="right:308.90px;top:375.61px;font-size:6.8px;line-height:7.82px;font-weight:normal;color:#000;transform:scaleX(0.8824);transform-origin:right;">0</div>
<div class="t" style="right:276.90px;top:375.61px;font-size:6.8px;line-height:7.82px;font-weight:normal;color:#000;transform:scaleX(0.8824);transform-origin:right;">0</div>
<div class="t" style="right:244.70px;top:375.61px;font-size:6.8px;line-height:7.82px;font-weight:normal;color:#000;transform:scaleX(0.8824);transform-origin:right;">0</div>
<div class="t" style="right:212.10px;top:375.61px;font-size:6.8px;line-height:7.82px;font-weight:normal;color:#000;transform:scaleX(0.8824);transform-origin:right;">0</div>
<div class="t" style="right:180.10px;top:375.61px;font-size:6.8px;line-height:7.82px;font-weight:normal;color:#000;transform:scaleX(0.8824);transform-origin:right;">0</div>
<div class="t" style="right:147.80px;top:375.61px;font-size:6.8px;line-height:7.82px;font-weight:normal;color:#000;transform:scaleX(0.8824);transform-origin:right;">750</div>
<div class="t" style="right:116.10px;top:375.61px;font-size:6.8px;line-height:7.82px;font-weight:normal;color:#000;transform:scaleX(0.8824);transform-origin:right;">0</div>
<div class="t" style="right:84.20px;top:375.61px;font-size:6.8px;line-height:7.82px;font-weight:normal;color:#000;transform:scaleX(0.8824);transform-origin:right;">0</div>
<div class="t" style="right:62.80px;top:375.61px;font-size:6.8px;line-height:7.82px;font-weight:normal;color:#000;transform:scaleX(0.8824);transform-origin:right;">0</div>
<div class="t" style="left:14.50px;top:385.11px;font-size:6.8px;line-height:7.82px;font-weight:normal;color:#000;transform:scaleX(0.8426);transform-origin:left;">AST4010</div>
<div class="t" style="left:47.00px;top:385.11px;font-size:6.8px;line-height:7.82px;font-weight:normal;color:#000;transform:scaleX(0.8029);transform-origin:left;">AST_COSTCTR</div>
<div class="t" style="left:93.90px;top:385.11px;font-size:6.8px;line-height:7.82px;font-weight:normal;color:#000;transform:scaleX(0.9);transform-origin:left;">ADMIN</div>
<div class="t" style="right:524.70px;top:385.11px;font-size:6.8px;line-height:7.82px;font-weight:normal;color:#000;transform:scaleX(0.8824);transform-origin:right;">750</div>
<div class="t" style="left:178.10px;top:385.11px;font-size:6.8px;line-height:7.82px;font-weight:normal;color:#000;transform:scaleX(0.9706);transform-origin:left;">July</div>
<div class="t" style="right:438.30px;top:385.11px;font-size:6.8px;line-height:7.82px;font-weight:normal;color:#000;transform:scaleX(0.8824);transform-origin:right;">0</div>
<div class="t" style="right:406.20px;top:385.11px;font-size:6.8px;line-height:7.82px;font-weight:normal;color:#000;transform:scaleX(0.8824);transform-origin:right;">0</div>
<div class="t" style="right:373.60px;top:385.11px;font-size:6.8px;line-height:7.82px;font-weight:normal;color:#000;transform:scaleX(0.8824);transform-origin:right;">0</div>
<div class="t" style="right:341.00px;top:385.11px;font-size:6.8px;line-height:7.82px;font-weight:normal;color:#000;transform:scaleX(0.8824);transform-origin:right;">0</div>
<div class="t" style="right:308.90px;top:385.11px;font-size:6.8px;line-height:7.82px;font-weight:normal;color:#000;transform:scaleX(0.8824);transform-origin:right;">0</div>
<div class="t" style="right:276.90px;top:385.11px;font-size:6.8px;line-height:7.82px;font-weight:normal;color:#000;transform:scaleX(0.8824);transform-origin:right;">0</div>
<div class="t" style="right:244.70px;top:385.11px;font-size:6.8px;line-height:7.82px;font-weight:normal;color:#000;transform:scaleX(0.8824);transform-origin:right;">0</div>
<div class="t" style="right:212.10px;top:385.11px;font-size:6.8px;line-height:7.82px;font-weight:normal;color:#000;transform:scaleX(0.8824);transform-origin:right;">0</div>
<div class="t" style="right:180.10px;top:385.11px;font-size:6.8px;line-height:7.82px;font-weight:normal;color:#000;transform:scaleX(0.8824);transform-origin:right;">0</div>
<div class="t" style="right:147.80px;top:385.11px;font-size:6.8px;line-height:7.82px;font-weight:normal;color:#000;transform:scaleX(0.8824);transform-origin:right;">0</div>
<div class="t" style="right:116.10px;top:385.11px;font-size:6.8px;line-height:7.82px;font-weight:normal;color:#000;transform:scaleX(0.8824);transform-origin:right;">750</div>
<div class="t" style="right:84.20px;top:385.11px;font-size:6.8px;line-height:7.82px;font-weight:normal;color:#000;transform:scaleX(0.8824);transform-origin:right;">0</div>
<div class="t" style="right:62.80px;top:385.11px;font-size:6.8px;line-height:7.82px;font-weight:normal;color:#000;transform:scaleX(0.8824);transform-origin:right;">0</div>
<div class="t" style="left:14.50px;top:394.61px;font-size:6.8px;line-height:7.82px;font-weight:normal;color:#000;transform:scaleX(0.8426);transform-origin:left;">AST4010</div>
<div class="t" style="left:47.00px;top:394.61px;font-size:6.8px;line-height:7.82px;font-weight:normal;color:#000;transform:scaleX(0.8029);transform-origin:left;">AST_COSTCTR</div>
<div class="t" style="left:93.90px;top:394.61px;font-size:6.8px;line-height:7.82px;font-weight:normal;color:#000;transform:scaleX(0.9);transform-origin:left;">ADMIN</div>
<div class="t" style="right:524.70px;top:394.61px;font-size:6.8px;line-height:7.82px;font-weight:normal;color:#000;transform:scaleX(0.8824);transform-origin:right;">750</div>
<div class="t" style="left:178.10px;top:394.61px;font-size:6.8px;line-height:7.82px;font-weight:normal;color:#000;transform:scaleX(0.9706);transform-origin:left;">August</div>
<div class="t" style="right:438.30px;top:394.61px;font-size:6.8px;line-height:7.82px;font-weight:normal;color:#000;transform:scaleX(0.8824);transform-origin:right;">0</div>
<div class="t" style="right:406.20px;top:394.61px;font-size:6.8px;line-height:7.82px;font-weight:normal;color:#000;transform:scaleX(0.8824);transform-origin:right;">0</div>
<div class="t" style="right:373.60px;top:394.61px;font-size:6.8px;line-height:7.82px;font-weight:normal;color:#000;transform:scaleX(0.8824);transform-origin:right;">0</div>
<div class="t" style="right:341.00px;top:394.61px;font-size:6.8px;line-height:7.82px;font-weight:normal;color:#000;transform:scaleX(0.8824);transform-origin:right;">0</div>
<div class="t" style="right:308.90px;top:394.61px;font-size:6.8px;line-height:7.82px;font-weight:normal;color:#000;transform:scaleX(0.8824);transform-origin:right;">0</div>
<div class="t" style="right:276.90px;top:394.61px;font-size:6.8px;line-height:7.82px;font-weight:normal;color:#000;transform:scaleX(0.8824);transform-origin:right;">0</div>
<div class="t" style="right:244.70px;top:394.61px;font-size:6.8px;line-height:7.82px;font-weight:normal;color:#000;transform:scaleX(0.8824);transform-origin:right;">0</div>
<div class="t" style="right:212.10px;top:394.61px;font-size:6.8px;line-height:7.82px;font-weight:normal;color:#000;transform:scaleX(0.8824);transform-origin:right;">0</div>
<div class="t" style="right:180.10px;top:394.61px;font-size:6.8px;line-height:7.82px;font-weight:normal;color:#000;transform:scaleX(0.8824);transform-origin:right;">0</div>
<div class="t" style="right:147.80px;top:394.61px;font-size:6.8px;line-height:7.82px;font-weight:normal;color:#000;transform:scaleX(0.8824);transform-origin:right;">0</div>
<div class="t" style="right:116.10px;top:394.61px;font-size:6.8px;line-height:7.82px;font-weight:normal;color:#000;transform:scaleX(0.8824);transform-origin:right;">0</div>
<div class="t" style="right:84.20px;top:394.61px;font-size:6.8px;line-height:7.82px;font-weight:normal;color:#000;transform:scaleX(0.8824);transform-origin:right;">750</div>
<div class="t" style="right:62.80px;top:394.61px;font-size:6.8px;line-height:7.82px;font-weight:normal;color:#000;transform:scaleX(0.8824);transform-origin:right;">0</div>
<div class="t" style="left:14.50px;top:404.11px;font-size:6.8px;line-height:7.82px;font-weight:normal;color:#000;transform:scaleX(0.8426);transform-origin:left;">AST4025</div>
<div class="t" style="left:47.00px;top:404.11px;font-size:6.8px;line-height:7.82px;font-weight:normal;color:#000;transform:scaleX(0.8029);transform-origin:left;">AST_COSTCTR</div>
<div class="t" style="left:93.90px;top:404.11px;font-size:6.8px;line-height:7.82px;font-weight:normal;color:#000;transform:scaleX(0.9);transform-origin:left;">ADMIN</div>
<div class="t" style="right:524.70px;top:404.11px;font-size:6.8px;line-height:7.82px;font-weight:normal;color:#000;transform:scaleX(0.8824);transform-origin:right;">600</div>
<div class="t" style="left:178.10px;top:404.11px;font-size:6.8px;line-height:7.82px;font-weight:normal;color:#000;transform:scaleX(0.9529);transform-origin:left;">Monthly</div>
<div class="t" style="right:438.30px;top:404.11px;font-size:6.8px;line-height:7.82px;font-weight:normal;color:#000;transform:scaleX(0.8824);transform-origin:right;">50</div>
<div class="t" style="right:406.20px;top:404.11px;font-size:6.8px;line-height:7.82px;font-weight:normal;color:#000;transform:scaleX(0.8824);transform-origin:right;">50</div>
<div class="t" style="right:373.60px;top:404.11px;font-size:6.8px;line-height:7.82px;font-weight:normal;color:#000;transform:scaleX(0.8824);transform-origin:right;">50</div>
<div class="t" style="right:341.00px;top:404.11px;font-size:6.8px;line-height:7.82px;font-weight:normal;color:#000;transform:scaleX(0.8824);transform-origin:right;">50</div>
<div class="t" style="right:308.90px;top:404.11px;font-size:6.8px;line-height:7.82px;font-weight:normal;color:#000;transform:scaleX(0.8824);transform-origin:right;">50</div>
<div class="t" style="right:276.90px;top:404.11px;font-size:6.8px;line-height:7.82px;font-weight:normal;color:#000;transform:scaleX(0.8824);transform-origin:right;">50</div>
<div class="t" style="right:244.70px;top:404.11px;font-size:6.8px;line-height:7.82px;font-weight:normal;color:#000;transform:scaleX(0.8824);transform-origin:right;">50</div>
<div class="t" style="right:212.10px;top:404.11px;font-size:6.8px;line-height:7.82px;font-weight:normal;color:#000;transform:scaleX(0.8824);transform-origin:right;">50</div>
<div class="t" style="right:180.10px;top:404.11px;font-size:6.8px;line-height:7.82px;font-weight:normal;color:#000;transform:scaleX(0.8824);transform-origin:right;">50</div>
<div class="t" style="right:147.80px;top:404.11px;font-size:6.8px;line-height:7.82px;font-weight:normal;color:#000;transform:scaleX(0.8824);transform-origin:right;">50</div>
<div class="t" style="right:116.10px;top:404.11px;font-size:6.8px;line-height:7.82px;font-weight:normal;color:#000;transform:scaleX(0.8824);transform-origin:right;">50</div>
<div class="t" style="right:84.20px;top:404.11px;font-size:6.8px;line-height:7.82px;font-weight:normal;color:#000;transform:scaleX(0.8824);transform-origin:right;">50</div>
<div class="t" style="right:62.80px;top:404.11px;font-size:6.8px;line-height:7.82px;font-weight:normal;color:#000;transform:scaleX(0.8824);transform-origin:right;">0</div>
<div class="r" style="left:644px;top:131.5px;width:50px;height:38px;background:#f0f0f0;border-top:1px solid #e0e0e0;border-left:1px solid #e0e0e0;box-shadow:1px 1px 0 #9a9a9a;"></div>
<div class="t" style="left:569.50px;width:200px;text-align:center;top:138.39px;font-size:6.3px;line-height:7.24px;font-weight:bold;color:#000;-webkit-text-stroke:0.07px #000;">Press to create</div>
<div class="t" style="left:569.50px;width:200px;text-align:center;top:147.59px;font-size:6.3px;line-height:7.24px;font-weight:bold;color:#000;-webkit-text-stroke:0.07px #000;">PSF Upload</div>
<div class="t" style="left:569.80px;width:200px;text-align:center;top:156.69px;font-size:6.3px;line-height:7.24px;font-weight:bold;color:#000;-webkit-text-stroke:0.07px #000;">Template</div>
<div class="t" style="left:12.00px;top:4.87px;font-size:6px;line-height:6.90px;font-weight:normal;color:#b3d3bf;transform:scaleX(0.93);transform-origin:left;">AutoSave</div>
<svg class="r" style="left:38.5px;top:3.5px" width="20" height="9" viewBox="0 0 20 9"><rect x="0.9" y="0.9" width="18" height="6.6" rx="3.3" fill="none" stroke="#e3efe7" stroke-width="0.8"/><circle cx="4.6" cy="4.2" r="1.75" fill="#fff"/><text x="9.8" y="5.9" font-family="Liberation Sans" font-size="4.6" fill="#eef6f1">Off</text></svg>
<svg class="r" style="left:63.5px;top:4.5px" width="9" height="9" viewBox="0 0 9 9"><path d="M0.9 0.9H7.2L8.2 1.9V8.2H0.9Z M2.6 0.9V3.2H6.4V0.9 M2.2 8.2V5.2H6.9V8.2" fill="none" stroke="#d6e8dc" stroke-width="0.65"/></svg>
<svg class="r" style="left:74px;top:2px" width="50" height="14" viewBox="74 2 50 14"><path d="M78.6 5.6 V8.6 H81.4" fill="none" stroke="#cfe3d6" stroke-width="0.75"/><path d="M78.8 8.4 C80.2 6.6 82.2 5.9 83.8 6.6 C85.4 7.4 85.6 9.2 84.4 10.6 L81.2 13.2" fill="none" stroke="#cfe3d6" stroke-width="0.8"/><path d="M88 7.4 L89.3 8.6 L90.6 7.4" fill="none" stroke="#cfe3d6" stroke-width="0.55"/>
<path d="M102.8 5.6 V8.6 H100" fill="none" stroke="#5f9c79" stroke-width="0.75"/><path d="M102.6 8.4 C101.2 6.6 99.2 5.9 97.6 6.6 C96 7.4 95.8 9.2 97 10.6 L100.2 13.2" fill="none" stroke="#5f9c79" stroke-width="0.8"/><path d="M106.2 7.4 L107.5 8.6 L108.8 7.4" fill="none" stroke="#5f9c79" stroke-width="0.55"/>
<path d="M116.2 6.6 H119.6" stroke="#dfeee5" stroke-width="0.6"/><path d="M116.2 7.8 H119.6 L117.9 9.8 Z" fill="#dfeee5"/></svg>
<div class="t" style="left:203.50px;top:5.17px;font-size:6px;line-height:6.90px;font-weight:normal;color:#d4e6da;transform:scaleX(0.9);transform-origin:left;">Budget Upload Template&nbsp; -&nbsp; Saved&nbsp;&nbsp; <svg width="4" height="3" viewBox="0 0 4 3" style="vertical-align:-0.3px;margin-left:-1px"><path d="M0.6 0.6H3.4L2 2.2Z" fill="#d4e6da"/></svg></div>
<div class="r" style="left:374px;top:3.5px;width:174px;height:10.5px;background:#a6d3b7;"></div>
<svg class="r" style="left:382px;top:4px" width="9" height="9" viewBox="0 0 9 9"><circle cx="5.3" cy="3.7" r="2.3" fill="none" stroke="#2d6e47" stroke-width="0.8"/><path d="M3.6 5.4L1.2 7.8" stroke="#2d6e47" stroke-width="0.9"/></svg>
<div class="t" style="left:397.30px;top:5.00px;font-size:6.4px;line-height:7.36px;font-weight:normal;color:#3f7f58;transform:scaleX(0.84);transform-origin:left;">Search</div>
<div class="r" style="left:683px;top:1px;width:16px;height:15px;background:#1d6a3f;border-radius:8px 0 0 8px;"></div>
<div class="t" style="left:10.00px;top:20.97px;font-size:6px;line-height:6.90px;font-weight:normal;color:#333;transform:scaleX(0.99);transform-origin:left;-webkit-text-stroke:0.08px #333;">File</div>
<div class="t" style="left:33.70px;top:20.97px;font-size:6px;line-height:6.90px;font-weight:normal;color:#333;transform:scaleX(0.99);transform-origin:left;-webkit-text-stroke:0.08px #333;">Home</div>
<div class="t" style="left:64.60px;top:20.97px;font-size:6px;line-height:6.90px;font-weight:normal;color:#333;transform:scaleX(0.99);transform-origin:left;-webkit-text-stroke:0.08px #333;">Insert</div>
<div class="t" style="left:94.30px;top:20.97px;font-size:6px;line-height:6.90px;font-weight:normal;color:#333;transform:scaleX(0.99);transform-origin:left;-webkit-text-stroke:0.08px #333;">Page Layout</div>
<div class="t" style="left:141.70px;top:20.97px;font-size:6px;line-height:6.90px;font-weight:bold;color:#2a2a2a;transform:scaleX(0.95);transform-origin:left;">Formulas</div>
<div class="t" style="left:180.60px;top:20.97px;font-size:6px;line-height:6.90px;font-weight:normal;color:#333;transform:scaleX(0.99);transform-origin:left;-webkit-text-stroke:0.08px #333;">Data</div>
<div class="t" style="left:207.70px;top:20.97px;font-size:6px;line-height:6.90px;font-weight:normal;color:#333;transform:scaleX(0.99);transform-origin:left;-webkit-text-stroke:0.08px #333;">Review</div>
<div class="t" style="left:240.00px;top:20.97px;font-size:6px;line-height:6.90px;font-weight:normal;color:#333;transform:scaleX(0.99);transform-origin:left;-webkit-text-stroke:0.08px #333;">View</div>
<div class="t" style="left:265.70px;top:20.97px;font-size:6px;line-height:6.90px;font-weight:normal;color:#333;transform:scaleX(0.99);transform-origin:left;-webkit-text-stroke:0.08px #333;">Developer</div>
<div class="t" style="left:307.00px;top:20.97px;font-size:6px;line-height:6.90px;font-weight:normal;color:#333;transform:scaleX(0.99);transform-origin:left;-webkit-text-stroke:0.08px #333;">Help</div>
<div class="t" style="left:333.70px;top:20.97px;font-size:6px;line-height:6.90px;font-weight:normal;color:#333;transform:scaleX(0.92);transform-origin:left;-webkit-text-stroke:0.08px #333;">ACROBAT</div>
<div class="r" style="left:142px;top:28px;width:27px;height:2px;background:#217346;"></div>
<svg class="r" style="left:10px;top:32px" width="16" height="18" viewBox="10 32 16 18"><path d="M21.6 35.3 C21.2 34.5 19.8 34.3 19 35.3 C18.5 36 18.2 37 17.9 38.6 L16.3 45.4 C15.9 47 15.1 47.8 14 47.7 C13.2 47.6 12.8 47.2 12.5 46.9" fill="none" stroke="#3c3c3c" stroke-width="1.0"/><path d="M15.2 40.1 H19.3" stroke="#3c3c3c" stroke-width="0.75"/><path d="M18.2 40.2 C19.2 39.6 19.9 40.2 20.3 41.8 C20.7 43.5 21.2 45 23.3 44.2 M23.2 40.2 C22.3 40.2 21.6 40.8 20.6 42 C19.6 43.3 18.8 44.6 17.8 44.5" fill="none" stroke="#3c3c3c" stroke-width="0.85"/></svg>
<div class="t" style="left:-82.50px;width:200px;text-align:center;top:50.66px;font-size:5.8px;line-height:6.67px;font-weight:normal;color:#444;transform:scaleX(0.99);transform-origin:center;">Insert</div>
<div class="t" style="left:-82.50px;width:200px;text-align:center;top:58.46px;font-size:5.8px;line-height:6.67px;font-weight:normal;color:#444;transform:scaleX(0.99);transform-origin:center;">Function</div>
<div class="r" style="left:31px;top:35px;width:1px;height:28px;background:#dadada"></div>
<svg class="r" style="left:41px;top:34px" width="12" height="14" viewBox="0 0 12 14"><path d="M11 1.5H1.6L7 7.2L1.6 12.8H11" fill="none" stroke="#444" stroke-width="0.9"/></svg>
<div class="t" style="left:-53.00px;width:200px;text-align:center;top:50.66px;font-size:5.8px;line-height:6.67px;font-weight:normal;color:#444;transform:scaleX(0.99);transform-origin:center;">AutoSum</div>
<svg class="r" style="left:44.5px;top:59.8px" width="4" height="3" viewBox="0 0 4 3"><path d="M0.5 0.8L2 2.2L3.5 0.8" fill="none" stroke="#666" stroke-width="0.6"/></svg>
<svg class="r" style="left:65.5px;top:33.5px" width="12" height="15" viewBox="0 0 12 15"><path d="M0.9 1.9 Q0.9 0.9 1.9 0.9 H10.9 V13.4 H0.9 Z" fill="#fff" stroke="#727272" stroke-width="0.75"/><path d="M0.9 11.1 H10.9" stroke="#727272" stroke-width="0.7"/><path d="M6.00 2.30 L7.18 4.98 L10.09 5.27 L7.90 7.22 L8.53 10.08 L6.00 8.60 L3.47 10.08 L4.10 7.22 L1.91 5.27 L4.82 4.98 Z" fill="none" stroke="#3d8fd6" stroke-width="0.75" stroke-linejoin="round"/></svg>
<div class="t" style="left:-28.00px;width:200px;text-align:center;top:50.66px;font-size:5.8px;line-height:6.67px;font-weight:normal;color:#444;transform:scaleX(0.99);transform-origin:center;">Recently</div>
<div class="t" style="left:-28.00px;width:200px;text-align:center;top:58.46px;font-size:5.8px;line-height:6.67px;font-weight:normal;color:#444;transform:scaleX(0.99);transform-origin:center;">Used<svg width="5" height="4" viewBox="0 0 5 4" style="margin-left:1px;vertical-align:0.5px"><path d="M1 1L2.5 2.5L4 1" fill="none" stroke="#555" stroke-width="0.7"/></svg></div>
<svg class="r" style="left:90px;top:33.5px" width="12" height="15" viewBox="0 0 12 15"><path d="M0.9 1.9 Q0.9 0.9 1.9 0.9 H10.9 V13.4 H0.9 Z" fill="#fff" stroke="#727272" stroke-width="0.75"/><path d="M0.9 11.1 H10.9" stroke="#727272" stroke-width="0.7"/><rect x="2.6" y="2.9" width="6.2" height="6.4" rx="1.3" fill="#6dbb78"/><path d="M3.8 7.8 Q5.7 5.6 7.6 7.8 M3.6 4.6 H7.8" fill="none" stroke="#b9e0be" stroke-width="0.6"/></svg>
<div class="t" style="left:-4.00px;width:200px;text-align:center;top:50.66px;font-size:5.8px;line-height:6.67px;font-weight:normal;color:#444;transform:scaleX(0.99);transform-origin:center;">Financial</div>
<svg class="r" style="left:94px;top:59.8px" width="4" height="3" viewBox="0 0 4 3"><path d="M0.5 0.8L2 2.2L3.5 0.8" fill="none" stroke="#666" stroke-width="0.6"/></svg>
<svg class="r" style="left:112px;top:33.5px" width="12" height="15" viewBox="0 0 12 15"><path d="M0.9 1.9 Q0.9 0.9 1.9 0.9 H10.9 V13.4 H0.9 Z" fill="#fff" stroke="#727272" stroke-width="0.75"/><path d="M0.9 11.1 H10.9" stroke="#727272" stroke-width="0.7"/><path d="M3.9 4.4 Q3.9 2.2 6 2.2 Q8.2 2.2 8.2 4.3 Q8.2 5.8 6.1 6.8 V8.6 M6.1 9.8 V10.6" fill="none" stroke="#b660d8" stroke-width="0.8"/></svg>
<div class="t" style="left:18.50px;width:200px;text-align:center;top:50.66px;font-size:5.8px;line-height:6.67px;font-weight:normal;color:#444;transform:scaleX(0.99);transform-origin:center;">Logical</div>
<svg class="r" style="left:116.5px;top:59.8px" width="4" height="3" viewBox="0 0 4 3"><path d="M0.5 0.8L2 2.2L3.5 0.8" fill="none" stroke="#666" stroke-width="0.6"/></svg>
<svg class="r" style="left:132px;top:33.5px" width="12" height="15" viewBox="0 0 12 15"><path d="M0.9 1.9 Q0.9 0.9 1.9 0.9 H10.9 V13.4 H0.9 Z" fill="#fff" stroke="#727272" stroke-width="0.75"/><path d="M0.9 11.1 H10.9" stroke="#727272" stroke-width="0.7"/><path d="M3.1 10.4 L6 2.2 L8.9 10.4 M4.1 7.6 H7.9" fill="none" stroke="#3d8fd6" stroke-width="1.05"/></svg>
<div class="t" style="left:38.50px;width:200px;text-align:center;top:50.66px;font-size:5.8px;line-height:6.67px;font-weight:normal;color:#444;transform:scaleX(0.99);transform-origin:center;">Text</div>
<svg class="r" style="left:136.5px;top:59.8px" width="4" height="3" viewBox="0 0 4 3"><path d="M0.5 0.8L2 2.2L3.5 0.8" fill="none" stroke="#666" stroke-width="0.6"/></svg>
<svg class="r" style="left:152px;top:33.5px" width="12" height="15" viewBox="0 0 12 15"><path d="M0.9 1.9 Q0.9 0.9 1.9 0.9 H10.9 V13.4 H0.9 Z" fill="#fff" stroke="#727272" stroke-width="0.75"/><path d="M0.9 11.1 H10.9" stroke="#727272" stroke-width="0.7"/><circle cx="6" cy="6.4" r="3.5" fill="none" stroke="#e85a5a" stroke-width="0.8"/><path d="M6 4.4V6.5L7.2 7.4" fill="none" stroke="#e85a5a" stroke-width="0.6"/><path d="M5 2.1h2" stroke="#e85a5a" stroke-width="0.6"/></svg>
<div class="t" style="left:58.50px;width:200px;text-align:center;top:50.66px;font-size:5.8px;line-height:6.67px;font-weight:normal;color:#444;transform:scaleX(0.99);transform-origin:center;">Date &amp;</div>
<div class="t" style="left:58.50px;width:200px;text-align:center;top:58.46px;font-size:5.8px;line-height:6.67px;font-weight:normal;color:#444;transform:scaleX(0.99);transform-origin:center;">Time<svg width="5" height="4" viewBox="0 0 5 4" style="margin-left:1px;vertical-align:0.5px"><path d="M1 1L2.5 2.5L4 1" fill="none" stroke="#555" stroke-width="0.7"/></svg></div>
<svg class="r" style="left:179.3px;top:33.5px" width="12" height="15" viewBox="0 0 12 15"><path d="M0.9 1.9 Q0.9 0.9 1.9 0.9 H10.9 V13.4 H0.9 Z" fill="#fff" stroke="#727272" stroke-width="0.75"/><path d="M0.9 11.1 H10.9" stroke="#727272" stroke-width="0.7"/><circle cx="5.2" cy="5.6" r="2.7" fill="none" stroke="#3d8fd6" stroke-width="0.85"/><path d="M7.1 7.5 L9.2 9.6" stroke="#3d8fd6" stroke-width="0.95"/></svg>
<div class="t" style="left:84.50px;width:200px;text-align:center;top:50.66px;font-size:5.8px;line-height:6.67px;font-weight:normal;color:#444;transform:scaleX(0.99);transform-origin:center;">Lookup &amp;</div>
<div class="t" style="left:84.50px;width:200px;text-align:center;top:58.46px;font-size:5.8px;line-height:6.67px;font-weight:normal;color:#444;transform:scaleX(0.99);transform-origin:center;">Reference<svg width="5" height="4" viewBox="0 0 5 4" style="margin-left:1px;vertical-align:0.5px"><path d="M1 1L2.5 2.5L4 1" fill="none" stroke="#555" stroke-width="0.7"/></svg></div>
<svg class="r" style="left:206.3px;top:33.5px" width="12" height="15" viewBox="0 0 12 15"><path d="M0.9 1.9 Q0.9 0.9 1.9 0.9 H10.9 V13.4 H0.9 Z" fill="#fff" stroke="#727272" stroke-width="0.75"/><path d="M0.9 11.1 H10.9" stroke="#727272" stroke-width="0.7"/><ellipse cx="5.9" cy="6.3" rx="2.4" ry="3.9" fill="none" stroke="#4aa35a" stroke-width="0.8"/><path d="M3.6 6.3 H8.2" stroke="#4aa35a" stroke-width="0.75"/></svg>
<div class="t" style="left:111.50px;width:200px;text-align:center;top:50.66px;font-size:5.8px;line-height:6.67px;font-weight:normal;color:#444;transform:scaleX(0.99);transform-origin:center;">Math &amp;</div>
<div class="t" style="left:111.50px;width:200px;text-align:center;top:58.46px;font-size:5.8px;line-height:6.67px;font-weight:normal;color:#444;transform:scaleX(0.99);transform-origin:center;">Trig<svg width="5" height="4" viewBox="0 0 5 4" style="margin-left:1px;vertical-align:0.5px"><path d="M1 1L2.5 2.5L4 1" fill="none" stroke="#555" stroke-width="0.7"/></svg></div>
<svg class="r" style="left:233.3px;top:33.5px" width="12" height="15" viewBox="0 0 12 15"><path d="M0.9 1.9 Q0.9 0.9 1.9 0.9 H10.9 V13.4 H0.9 Z" fill="#fff" stroke="#727272" stroke-width="0.75"/><path d="M0.9 11.1 H10.9" stroke="#727272" stroke-width="0.7"/><circle cx="3.6" cy="6" r="0.85" fill="#e85a5a"/><circle cx="5.9" cy="6" r="0.85" fill="#e85a5a"/><circle cx="8.2" cy="6" r="0.85" fill="#e85a5a"/></svg>
<div class="t" style="left:138.50px;width:200px;text-align:center;top:50.66px;font-size:5.8px;line-height:6.67px;font-weight:normal;color:#444;transform:scaleX(0.99);transform-origin:center;">More</div>
<div class="t" style="left:138.50px;width:200px;text-align:center;top:58.46px;font-size:5.8px;line-height:6.67px;font-weight:normal;color:#444;transform:scaleX(0.99);transform-origin:center;">Functions<svg width="5" height="4" viewBox="0 0 5 4" style="margin-left:1px;vertical-align:0.5px"><path d="M1 1L2.5 2.5L4 1" fill="none" stroke="#555" stroke-width="0.7"/></svg></div>
<div class="t" style="left:29.50px;width:200px;text-align:center;top:69.16px;font-size:5.8px;line-height:6.67px;font-weight:normal;color:#444;transform:scaleX(0.95);transform-origin:center;">Function Library</div>
<div class="r" style="left:258px;top:33px;width:1px;height:41px;background:#d6d6d6"></div>
<svg class="r" style="left:266px;top:33px" width="18" height="17" viewBox="0 0 18 17"><path d="M8.4 14.4 L2.1 8.4 L9.3 1.4 H14.6 V8.6" fill="#fff" stroke="#6a6a6a" stroke-width="0.8"/><circle cx="12.2" cy="4.2" r="0.65" fill="#555"/><rect x="10.4" y="8.7" width="5.9" height="6.6" fill="#fff" stroke="#777" stroke-width="0.7"/><rect x="11.2" y="10" width="1.6" height="1.3" fill="#3d8fd6"/><rect x="11.2" y="12.4" width="1.6" height="1.3" fill="#3d8fd6"/><path d="M13.4 10.6 H15.5 M13.4 13 H15.5" stroke="#8cc0ea" stroke-width="0.9"/></svg>
<div class="t" style="left:175.00px;width:200px;text-align:center;top:50.66px;font-size:5.8px;line-height:6.67px;font-weight:normal;color:#444;transform:scaleX(0.99);transform-origin:center;">Name</div>
<div class="t" style="left:175.00px;width:200px;text-align:center;top:58.46px;font-size:5.8px;line-height:6.67px;font-weight:normal;color:#444;transform:scaleX(0.99);transform-origin:center;">Manager</div>
<svg class="r" style="left:287.5px;top:33.5px" width="9" height="8" viewBox="0 0 9 8"><path d="M1 4 L4 1 H8 V4.5 L4.5 7.5 Z" fill="none" stroke="#555" stroke-width="0.75"/><path d="M3 4.5 L5.5 2.2 M4 5.4 L6.5 3.1" stroke="#888" stroke-width="0.5"/></svg>
<div class="t" style="left:297.80px;top:35.16px;font-size:5.8px;line-height:6.67px;font-weight:normal;color:#444;transform:scaleX(0.93);transform-origin:left;">Define Name</div>
<svg class="r" style="left:334.3px;top:36.8px" width="4" height="3" viewBox="0 0 4 3"><path d="M0.5 0.8L2 2.2L3.5 0.8" fill="none" stroke="#666" stroke-width="0.6"/></svg>
<svg class="r" style="left:287.5px;top:45px" width="9" height="8" viewBox="0 0 9 8"><path d="M1 4 L4 1 H8 V4 M4.5 7.5 L1 4" fill="none" stroke="#555" stroke-width="0.75"/><path d="M6 5 L7.5 6.8" stroke="#555" stroke-width="0.6"/></svg>
<div class="t" style="left:297.80px;top:46.86px;font-size:5.8px;line-height:6.67px;font-weight:normal;color:#444;transform:scaleX(0.93);transform-origin:left;">Use in Formula</div>
<svg class="r" style="left:336.5px;top:48.3px" width="4" height="3" viewBox="0 0 4 3"><path d="M0.5 0.8L2 2.2L3.5 0.8" fill="none" stroke="#666" stroke-width="0.6"/></svg>
<svg class="r" style="left:287.5px;top:56.5px" width="9" height="8" viewBox="0 0 9 8"><rect x="0.8" y="0.8" width="7.4" height="6.4" fill="#fff" stroke="#555" stroke-width="0.6"/><rect x="1.2" y="3" width="3.5" height="4" fill="#3d8fd6"/><path d="M4.8 5 L6 6.3 L8.2 3.2" fill="none" stroke="#444" stroke-width="0.7"/><path d="M1 2.2H8" stroke="#555" stroke-width="0.5"/></svg>
<div class="t" style="left:297.80px;top:58.06px;font-size:5.8px;line-height:6.67px;font-weight:normal;color:#444;transform:scaleX(0.93);transform-origin:left;">Create from Selection</div>
<div class="t" style="left:208.50px;width:200px;text-align:center;top:69.16px;font-size:5.8px;line-height:6.67px;font-weight:normal;color:#444;transform:scaleX(0.95);transform-origin:center;">Defined Names</div>
<div class="r" style="left:358px;top:33px;width:1px;height:41px;background:#d6d6d6"></div>
<svg class="r" style="left:363px;top:34px" width="10" height="9" viewBox="0 0 10 9"><rect x="0.7" y="0.7" width="4.2" height="3" fill="#fff" stroke="#666" stroke-width="0.6"/><rect x="5" y="5.2" width="4.3" height="3.2" fill="#fff" stroke="#666" stroke-width="0.6"/><path d="M0.7 2.2H4.9 M5 6.8H9.3" stroke="#888" stroke-width="0.4"/><path d="M2.2 3.9 V6.6 H4.4" fill="none" stroke="#3d8fd6" stroke-width="0.9"/><path d="M3.8 5.7 L4.8 6.6 L3.8 7.5" fill="none" stroke="#3d8fd6" stroke-width="0.6"/></svg>
<div class="t" style="left:373.00px;top:35.16px;font-size:5.8px;line-height:6.67px;font-weight:normal;color:#444;transform:scaleX(0.93);transform-origin:left;">Trace Precedents</div>
<svg class="r" style="left:363px;top:45px" width="10" height="9" viewBox="0 0 10 9"><rect x="0.7" y="0.7" width="4.2" height="3" fill="#fff" stroke="#666" stroke-width="0.6"/><rect x="5" y="5.2" width="4.3" height="3.2" fill="#fff" stroke="#666" stroke-width="0.6"/><path d="M0.7 2.2H4.9 M5 6.8H9.3" stroke="#888" stroke-width="0.4"/><path d="M2.2 3.9 V6.6 H4.4" fill="none" stroke="#3d8fd6" stroke-width="0.9"/><path d="M3.8 5.7 L4.8 6.6 L3.8 7.5" fill="none" stroke="#3d8fd6" stroke-width="0.6"/></svg>
<div class="t" style="left:373.00px;top:46.86px;font-size:5.8px;line-height:6.67px;font-weight:normal;color:#444;transform:scaleX(0.93);transform-origin:left;">Trace Dependents</div>
<svg class="r" style="left:363px;top:56px" width="10" height="10" viewBox="0 0 10 10"><path d="M0.9 6.4 H2.6 M1.8 2.2 H3.1 M6.1 0.9 V2.7" stroke="#3d8fd6" stroke-width="0.9" stroke-linecap="round"/><path d="M1.5 5.6 L2.1 3 M2.8 5.2 L5.4 2.9" stroke="#7fb6e6" stroke-width="0.6" stroke-dasharray="0.8 0.5"/><path d="M5 5.2 L8.4 8.6 M8.4 5.2 L5 8.6" stroke="#e8505a" stroke-width="0.85"/></svg>
<div class="t" style="left:372.80px;top:58.06px;font-size:5.8px;line-height:6.67px;font-weight:normal;color:#444;transform:scaleX(0.93);transform-origin:left;">Remove Arrows</div>
<svg class="r" style="left:416.2px;top:59.1px" width="4" height="3" viewBox="0 0 4 3"><path d="M0.5 0.8L2 2.2L3.5 0.8" fill="none" stroke="#666" stroke-width="0.6"/></svg>
<svg class="r" style="left:423.5px;top:33.5px" width="10" height="9" viewBox="0 0 10 9"><path d="M4 7.4 H0.8 V0.8 H7.2 V3.4" fill="none" stroke="#555" stroke-width="0.7"/><path d="M1.2 7 L6.8 1.2" stroke="#555" stroke-width="0.6"/><text x="4.6" y="8.6" font-family="Liberation Serif" font-style="italic" font-size="6" fill="#333">fx</text></svg>
<div class="t" style="left:433.50px;top:35.16px;font-size:5.8px;line-height:6.67px;font-weight:normal;color:#444;transform:scaleX(0.93);transform-origin:left;">Show Formulas</div>
<svg class="r" style="left:423.5px;top:45px" width="9" height="9" viewBox="0 0 9 9"><path d="M4.5 0.8 L8.3 8 H0.7 Z" fill="#f0a030"/><path d="M4.5 3 V5.5" stroke="#fff" stroke-width="0.8"/><path d="M3.6 6.3 L5 7.6 L8.6 4" fill="none" stroke="#2f9e4f" stroke-width="0.8"/></svg>
<div class="t" style="left:433.50px;top:46.86px;font-size:5.8px;line-height:6.67px;font-weight:normal;color:#444;transform:scaleX(0.93);transform-origin:left;">Error Checking</div>
<svg class="r" style="left:474.6px;top:48.3px" width="4" height="3" viewBox="0 0 4 3"><path d="M0.5 0.8L2 2.2L3.5 0.8" fill="none" stroke="#666" stroke-width="0.6"/></svg>
<svg class="r" style="left:423.5px;top:56.5px" width="10" height="10" viewBox="0 0 10 10"><circle cx="4.6" cy="4.6" r="3.9" fill="none" stroke="#555" stroke-width="0.7"/><text x="2.4" y="6.8" font-family="Liberation Serif" font-style="italic" font-size="5.6" fill="#333">fx</text></svg>
<div class="t" style="left:433.50px;top:58.06px;font-size:5.8px;line-height:6.67px;font-weight:normal;color:#444;transform:scaleX(0.93);transform-origin:left;">Evaluate Formula</div>
<div class="r" style="left:483px;top:36px;width:1px;height:27px;background:#dadada"></div>
<svg class="r" style="left:489px;top:35px" width="17" height="15" viewBox="0 0 17 15"><rect x="1.2" y="1.2" width="13.8" height="9.4" fill="#fff"/><path d="M1.2 10.6 V1.2 H15 V7.6" fill="none" stroke="#6a6a6a" stroke-width="0.7"/><path d="M1.2 2.6H15" stroke="#6a6a6a" stroke-width="0.6"/><path d="M1.2 10.6 H4.4" stroke="#6a6a6a" stroke-width="0.7"/><path d="M5 11 Q5 9.3 7.1 9.3 Q9.2 9.3 9.2 11.1 Q9.2 13.3 7.1 13.3 Q5 13.3 5 11Z M10.7 11 Q10.7 9.3 12.8 9.3 Q14.9 9.3 14.9 11.1 Q14.9 13.3 12.8 13.3 Q10.7 13.3 10.7 11Z M9.2 10.6 H10.7 M5 10.6 L4.2 8.8 M14.9 10.6 L15.8 8.8" fill="#fff" stroke="#3d8fd6" stroke-width="0.85"/></svg>
<div class="t" style="left:397.00px;width:200px;text-align:center;top:50.66px;font-size:5.8px;line-height:6.67px;font-weight:normal;color:#444;transform:scaleX(0.99);transform-origin:center;">Watch</div>
<div class="t" style="left:397.00px;width:200px;text-align:center;top:58.46px;font-size:5.8px;line-height:6.67px;font-weight:normal;color:#444;transform:scaleX(0.99);transform-origin:center;">Window</div>
<div class="t" style="left:335.20px;width:200px;text-align:center;top:69.16px;font-size:5.8px;line-height:6.67px;font-weight:normal;color:#444;transform:scaleX(0.95);transform-origin:center;">Formula Auditing</div>
<div class="r" style="left:512px;top:33px;width:1px;height:41px;background:#d6d6d6"></div>
<svg class="r" style="left:525.5px;top:33.5px" width="11" height="15" viewBox="0 0 11 15"><rect x="1.1" y="0.9" width="8.9" height="13" rx="0.5" fill="#fff" stroke="#666" stroke-width="0.7"/><rect x="2.2" y="2.4" width="6.6" height="1.9" fill="#3d8fd6"/><rect x="2.40" y="6.00" width="1.3" height="1.2" fill="#3a3a3a"/><rect x="2.40" y="8.80" width="1.3" height="1.2" fill="#3a3a3a"/><rect x="2.40" y="11.60" width="1.3" height="1.2" fill="#3a3a3a"/><rect x="4.70" y="6.00" width="1.3" height="1.2" fill="#3a3a3a"/><rect x="4.70" y="8.80" width="1.3" height="1.2" fill="#3a3a3a"/><rect x="4.70" y="11.60" width="1.3" height="1.2" fill="#3a3a3a"/><rect x="7.00" y="6.00" width="1.3" height="1.2" fill="#3a3a3a"/><rect x="7.00" y="8.80" width="1.3" height="1.2" fill="#3a3a3a"/><rect x="7.00" y="11.60" width="1.3" height="1.2" fill="#3a3a3a"/></svg>
<div class="t" style="left:431.30px;width:200px;text-align:center;top:50.66px;font-size:5.8px;line-height:6.67px;font-weight:normal;color:#444;transform:scaleX(0.99);transform-origin:center;">Calculation</div>
<div class="t" style="left:431.30px;width:200px;text-align:center;top:58.46px;font-size:5.8px;line-height:6.67px;font-weight:normal;color:#444;transform:scaleX(0.99);transform-origin:center;">Options<svg width="5" height="4" viewBox="0 0 5 4" style="margin-left:1px;vertical-align:0.5px"><path d="M1 1L2.5 2.5L4 1" fill="none" stroke="#555" stroke-width="0.7"/></svg></div>
<svg class="r" style="left:548.8px;top:37.6px" width="7" height="9" viewBox="0 0 7 9"><rect x="0.3" y="0.2" width="5.8" height="8" rx="0.5" fill="#6e6e6e"/><rect x="0.9" y="0.9" width="4.6" height="1.6" fill="#5aa6e8"/><path d="M1.3 4.3H6 M1.3 5.8H6 M1.3 7.3H6 M2.8 3.6V8 M4.4 3.6V8" stroke="#a8a8a8" stroke-width="0.5"/></svg>
<div class="t" style="left:557.70px;top:38.76px;font-size:5.8px;line-height:6.67px;font-weight:normal;color:#444;transform:scaleX(0.93);transform-origin:left;">Calculate Now</div>
<svg class="r" style="left:548px;top:52.5px" width="9" height="9" viewBox="0 0 9 9"><rect x="0.6" y="0.6" width="7.4" height="7.4" fill="#fff" stroke="#666" stroke-width="0.7"/><path d="M0.6 3H8 M0.6 5.4H8 M3 0.6V8 M5.5 0.6V8" stroke="#888" stroke-width="0.5"/><rect x="5" y="5" width="3.5" height="3.5" fill="#8a8a8a"/><rect x="5.5" y="5.4" width="2.5" height="0.9" fill="#6fb0e6"/></svg>
<div class="t" style="left:557.70px;top:53.96px;font-size:5.8px;line-height:6.67px;font-weight:normal;color:#444;transform:scaleX(0.93);transform-origin:left;">Calculate Sheet</div>
<div class="t" style="left:457.50px;width:200px;text-align:center;top:69.16px;font-size:5.8px;line-height:6.67px;font-weight:normal;color:#444;transform:scaleX(0.95);transform-origin:center;">Calculation</div>
<div class="r" style="left:602px;top:33px;width:1px;height:41px;background:#d6d6d6"></div>
<div class="r" style="left:3.5px;top:81px;width:48px;height:12.5px;background:#fff;border:1px solid #d8d8d8;box-sizing:border-box"></div>
<div class="t" style="left:7.00px;top:84.17px;font-size:6px;line-height:6.90px;font-weight:normal;color:#222;">29</div>
<svg class="r" style="left:45px;top:85.5px" width="5" height="3" viewBox="0 0 5 3"><path d="M0.5 0.5H4.5L2.5 2.6Z" fill="#555"/></svg>
<div class="r" style="left:58.6px;top:85.2px;width:1px;height:1px;background:#c4c4c4"></div>
<div class="r" style="left:58.6px;top:87.4px;width:1px;height:1px;background:#c4c4c4"></div>
<div class="r" style="left:58.6px;top:89.6px;width:1px;height:1px;background:#c4c4c4"></div>
<div class="r" style="left:66px;top:81.3px;width:52.5px;height:12.2px;background:#fff;border:1px solid #d8d8d8;box-sizing:border-box"></div>
<svg class="r" style="left:72px;top:85px" width="7" height="6" viewBox="0 0 7 6"><path d="M1 0.7L6 5.3M6 0.7L1 5.3" stroke="#a0a0a0" stroke-width="0.7"/></svg>
<svg class="r" style="left:89px;top:85px" width="8" height="6" viewBox="0 0 8 6"><path d="M0.8 3.2L2.8 5.2L7.2 0.8" fill="none" stroke="#a0a0a0" stroke-width="0.7"/></svg>
<div class="t" style="left:106.8px;top:83.2px;font-family:'Liberation Serif',serif;font-style:italic;font-size:7px;line-height:8px;color:#444">fx</div>
<div class="r" style="left:120px;top:81px;width:578px;height:31.5px;background:#fff;border:1px solid #d4d4d4;border-right:none;box-sizing:border-box"></div>

</body></html>
